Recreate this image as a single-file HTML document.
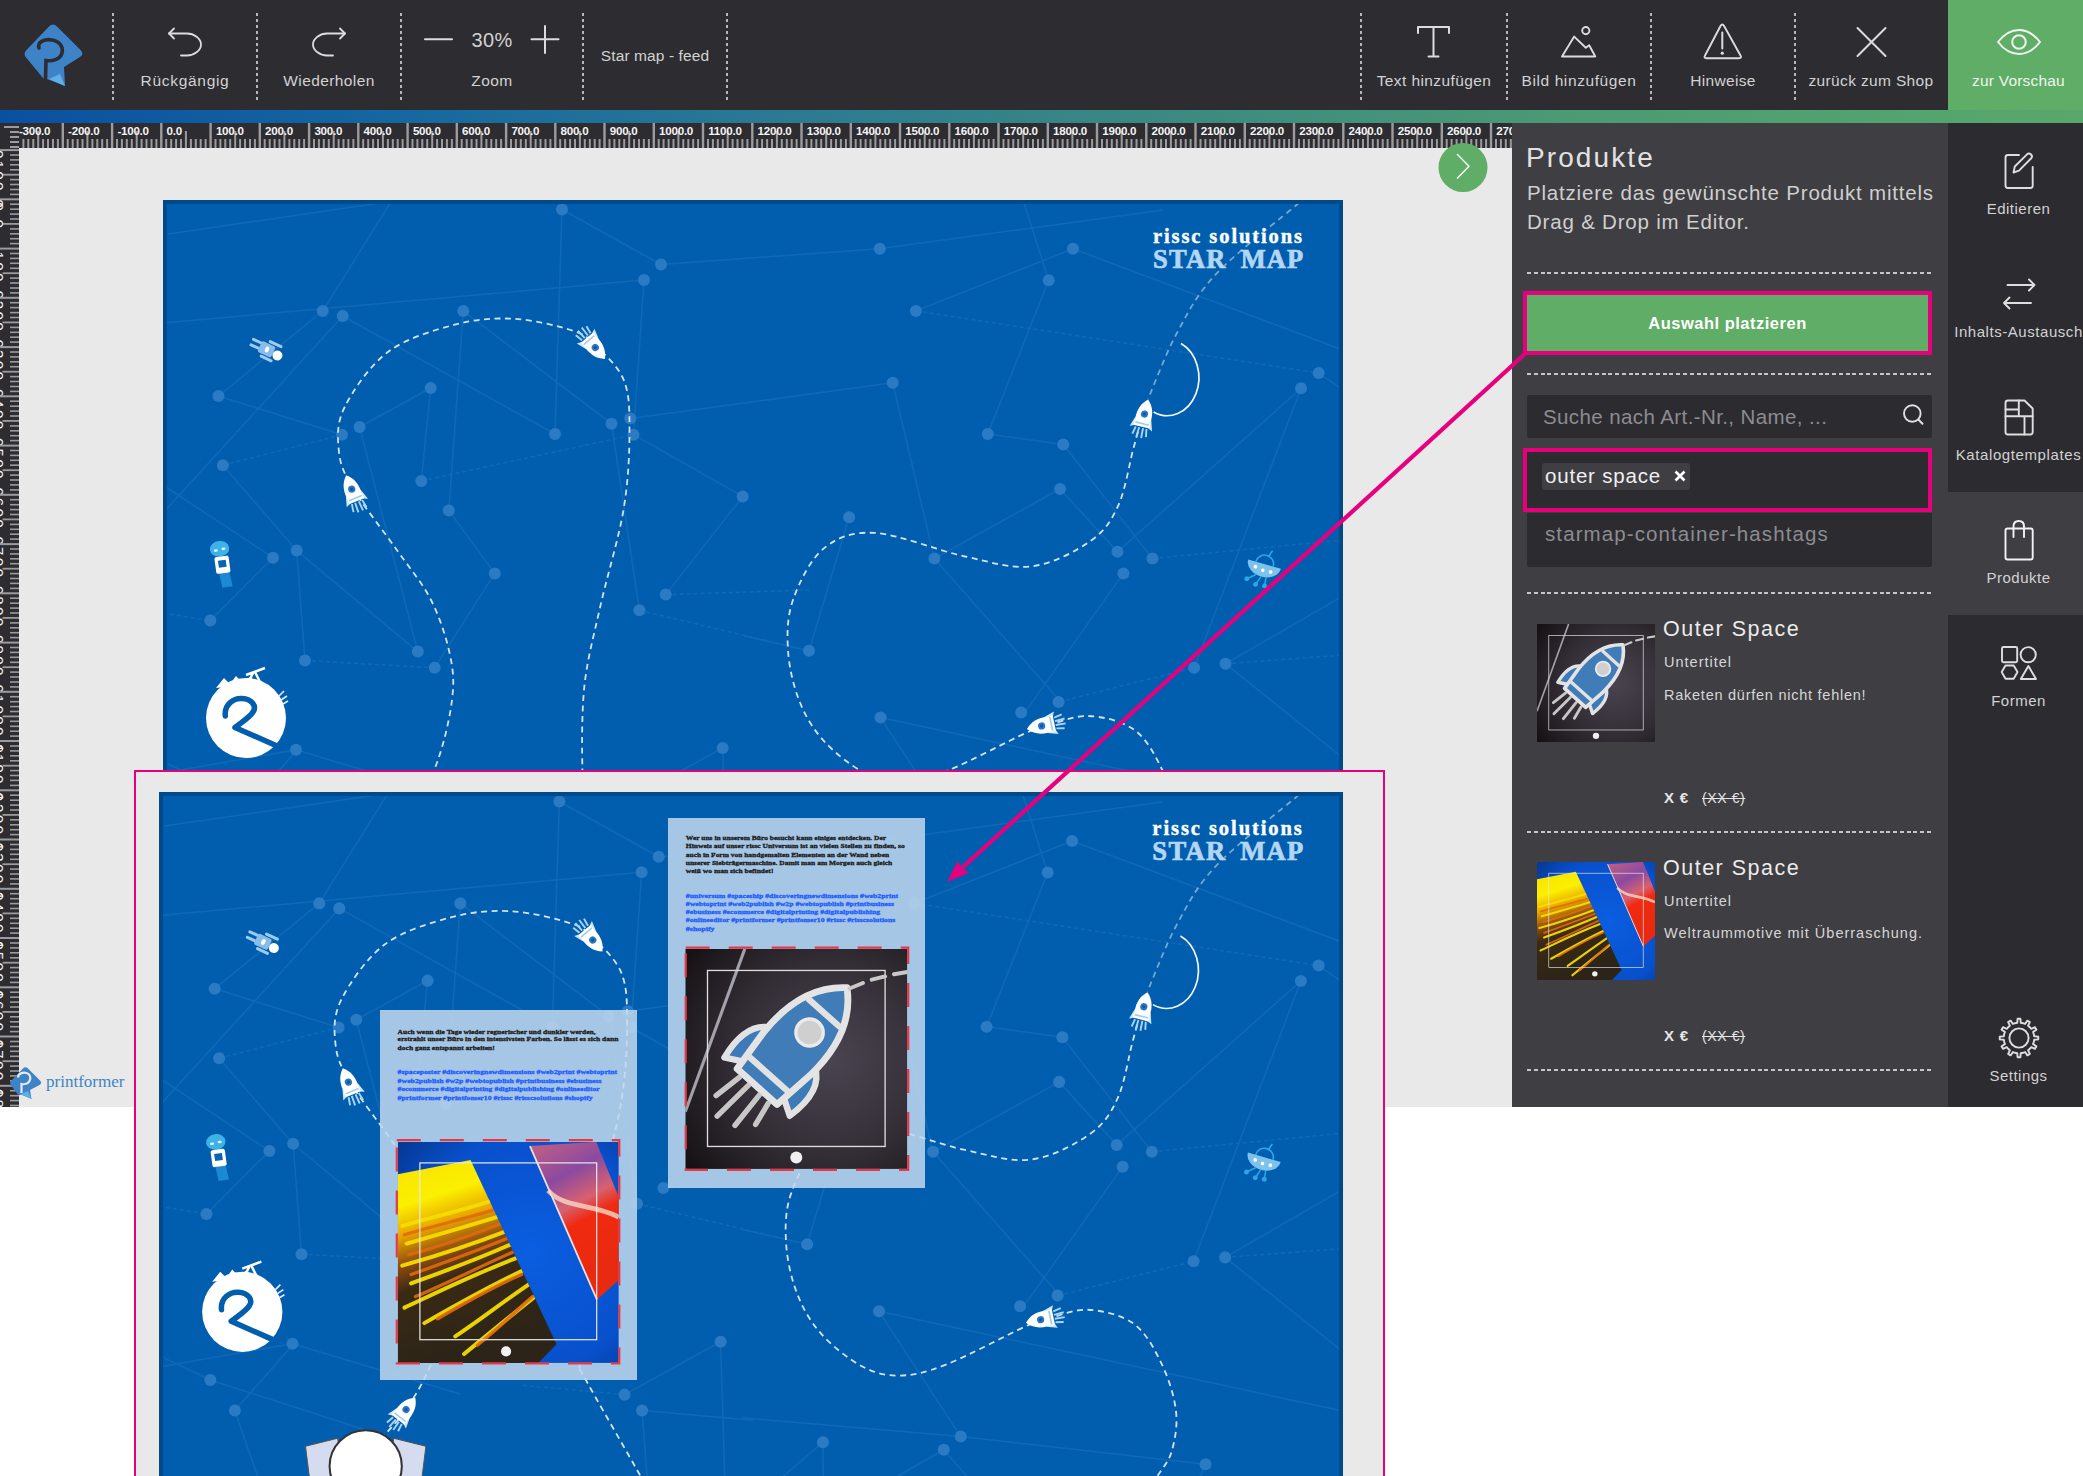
<!DOCTYPE html>
<html><head><meta charset="utf-8">
<style>
*{box-sizing:border-box;margin:0;padding:0}
html,body{width:2083px;height:1476px;overflow:hidden;background:#fff;font-family:"Liberation Sans",sans-serif}
.a{position:absolute}
#toolbar{left:0;top:0;width:2083px;height:110px;background:#2d2c31}
#grad{left:0;top:110px;width:2083px;height:13px;background:linear-gradient(90deg,#0a50a2 0%,#1468a0 19%,#2c7a93 38%,#3d8b80 58%,#4a9a74 75%,#58a86c 100%)}
#canvas{left:19px;top:148px;width:1493px;height:959px;background:#e9e9e9}
#panel{left:1512px;top:123px;width:436px;height:984px;background:#3f3e43}
#nav{left:1948px;top:123px;width:135px;height:984px;background:#2c2b30}
.sep{position:absolute;top:13px;height:87px;width:2px;background:repeating-linear-gradient(180deg,#b9b9bb 0 3px,transparent 3px 6px)}
.tl{position:absolute;color:#d2d2d2;font-size:15.5px;letter-spacing:0.45px;white-space:nowrap;text-align:center;line-height:16px}
.ic{position:absolute;overflow:visible}
.dots{position:absolute;left:1527px;width:404px;height:2.5px;margin-top:0.5px;background:repeating-linear-gradient(90deg,#c6c6c6 0 4px,transparent 4px 6.78px)}
#pink{left:134px;top:770px;width:1251px;height:760px;border:2px solid #e6007e;background:#e9e9e9;overflow:hidden}
.nl{position:absolute;left:1951px;width:135px;text-align:center;color:#d2d2d2;font-size:15px;letter-spacing:0.5px;white-space:nowrap;line-height:16px}
.ptxt{position:absolute;color:#d8d8d8;white-space:nowrap}
.card{position:absolute;width:257px;height:370px;background:rgba(255,255,255,0.62)}
.ct{position:absolute;left:17px;width:225px;font-family:"Liberation Serif",serif;font-weight:bold;font-size:6.6px;line-height:7.6px;color:#1f1f1f}
.ch{position:absolute;left:17px;width:225px;font-family:"Liberation Serif",serif;font-weight:bold;font-size:6.6px;line-height:7.6px;color:#2f5cf0}
.img{position:absolute;overflow:hidden}
.dash{position:absolute;border:2px dashed #e0323f}
</style></head><body>
<svg width="0" height="0" style="position:absolute"><defs><g id="starmap"><rect x="0" y="0" width="1180" height="720" fill="#015eae"/>
<g stroke="#3a86cc" stroke-width="1.5" opacity="0.27" fill="none">
<line x1="399.0" y1="9.5" x2="498.0" y2="64.5"/>
<line x1="498.0" y1="64.5" x2="716.8" y2="48.8"/>
<line x1="399.0" y1="9.5" x2="392.0" y2="234.0"/>
<line x1="0.0" y1="123.0" x2="481.0" y2="80.0"/>
<line x1="481.0" y1="80.0" x2="470.5" y2="234.7"/>
<line x1="159.7" y1="111.0" x2="55.5" y2="196.0"/>
<line x1="159.7" y1="111.0" x2="229.0" y2="0.0"/>
<line x1="179.7" y1="116.0" x2="0.0" y2="313.0"/>
<line x1="179.7" y1="116.0" x2="392.0" y2="234.0"/>
<line x1="300.3" y1="111.0" x2="285.8" y2="310.5"/>
<line x1="300.3" y1="111.0" x2="448.5" y2="223.7"/>
<line x1="55.5" y1="196.0" x2="179.0" y2="234.7"/>
<line x1="267.7" y1="188.0" x2="196.6" y2="227.0"/>
<line x1="267.7" y1="188.0" x2="258.3" y2="281.0"/>
<line x1="179.0" y1="234.7" x2="59.9" y2="265.3" stroke-dasharray="4 3"/>
<line x1="196.6" y1="227.0" x2="254.8" y2="451.6"/>
<line x1="258.3" y1="281.0" x2="470.5" y2="234.7" stroke-dasharray="4 3"/>
<line x1="467.3" y1="218.6" x2="729.7" y2="182.8"/>
<line x1="470.5" y1="234.7" x2="579.7" y2="296.4"/>
<line x1="448.5" y1="223.7" x2="476.4" y2="410.3"/>
<line x1="579.7" y1="296.4" x2="502.7" y2="394.6"/>
<line x1="502.7" y1="394.6" x2="646.0" y2="390.0" stroke-dasharray="4 3"/>
<line x1="476.4" y1="410.3" x2="646.0" y2="450.8" stroke-dasharray="4 3"/>
<line x1="285.8" y1="310.5" x2="331.8" y2="373.4"/>
<line x1="331.8" y1="373.4" x2="271.7" y2="467.7"/>
<line x1="133.7" y1="350.6" x2="142.0" y2="460.6"/>
<line x1="133.7" y1="350.6" x2="254.8" y2="451.6"/>
<line x1="59.9" y1="265.3" x2="133.7" y2="350.6"/>
<line x1="110.0" y1="357.7" x2="47.3" y2="420.5"/>
<line x1="0.0" y1="285.0" x2="110.0" y2="357.7"/>
<line x1="0.0" y1="413.0" x2="47.3" y2="420.5" stroke-dasharray="4 3"/>
<line x1="142.0" y1="460.6" x2="271.7" y2="467.7" stroke-dasharray="4 3"/>
<line x1="5.0" y1="34.0" x2="217.0" y2="3.0"/>
<line x1="0.0" y1="573.0" x2="133.0" y2="549.8"/>
<line x1="133.0" y1="549.8" x2="300.0" y2="600.0"/>
<line x1="716.8" y1="48.8" x2="1000.0" y2="10.0"/>
<line x1="910.0" y1="48.8" x2="752.9" y2="110.9"/>
<line x1="910.0" y1="48.8" x2="1180.0" y2="150.0"/>
<line x1="885.7" y1="80.3" x2="824.8" y2="233.9"/>
<line x1="885.7" y1="80.3" x2="860.0" y2="0.0"/>
<line x1="752.9" y1="110.9" x2="1155.7" y2="173.0" stroke-dasharray="4 3"/>
<line x1="729.7" y1="182.8" x2="771.4" y2="358.5"/>
<line x1="824.8" y1="233.9" x2="900.3" y2="244.5"/>
<line x1="900.3" y1="244.5" x2="989.5" y2="358.5"/>
<line x1="897.1" y1="288.9" x2="954.5" y2="351.8"/>
<line x1="897.1" y1="288.9" x2="771.4" y2="358.5"/>
<line x1="686.1" y1="317.2" x2="646.0" y2="450.8"/>
<line x1="771.4" y1="358.5" x2="898.8" y2="503.0"/>
<line x1="989.5" y1="358.5" x2="1180.0" y2="340.0" stroke-dasharray="4 3"/>
<line x1="960.4" y1="373.4" x2="860.8" y2="513.9"/>
<line x1="1138.0" y1="188.3" x2="954.5" y2="351.8"/>
<line x1="1138.0" y1="188.3" x2="1031.1" y2="467.7"/>
<line x1="1155.7" y1="173.0" x2="1180.0" y2="190.0"/>
<line x1="646.0" y1="450.8" x2="581.0" y2="436.0"/>
<line x1="717.6" y1="517.6" x2="799.0" y2="642.4"/>
<line x1="717.6" y1="517.6" x2="1180.0" y2="617.0"/>
<line x1="895.6" y1="501.9" x2="1031.1" y2="467.7" stroke-dasharray="4 3"/>
<line x1="1062.5" y1="463.8" x2="1180.0" y2="396.0"/>
<line x1="1062.5" y1="463.8" x2="1180.0" y2="455.0" stroke-dasharray="4 3"/>
<line x1="1062.5" y1="463.8" x2="1180.0" y2="558.0"/>
<line x1="581.0" y1="623.7" x2="799.0" y2="642.4"/>
<line x1="799.0" y1="642.4" x2="1043.0" y2="670.0"/>
<line x1="661.7" y1="648.0" x2="612.7" y2="690.0"/>
<line x1="661.7" y1="648.0" x2="662.0" y2="690.0"/>
<line x1="782.1" y1="655.5" x2="722.0" y2="690.0"/>
<line x1="782.1" y1="655.5" x2="812.0" y2="690.0"/>
<line x1="1043.0" y1="670.0" x2="1034.0" y2="690.0"/>
<line x1="5.0" y1="564.0" x2="51.2" y2="586.0"/>
<line x1="51.2" y1="586.0" x2="228.0" y2="643.0"/>
<line x1="75.6" y1="616.4" x2="132.7" y2="551.6"/>
<line x1="75.6" y1="616.4" x2="101.0" y2="690.0"/>
<line x1="464.0" y1="600.6" x2="559.7" y2="547.9"/>
<line x1="481.4" y1="616.4" x2="592.0" y2="626.0"/>
<line x1="481.4" y1="616.4" x2="487.0" y2="690.0"/>
<line x1="559.7" y1="547.9" x2="564.0" y2="690.0"/>
<line x1="464.0" y1="600.6" x2="360.0" y2="591.0" stroke-dasharray="4 3"/>
</g>
<g fill="#2a7bc4">
<circle cx="399.0" cy="9.5" r="6"/>
<circle cx="498.0" cy="64.5" r="6"/>
<circle cx="481.0" cy="80.0" r="6"/>
<circle cx="159.7" cy="111.0" r="6"/>
<circle cx="179.7" cy="116.0" r="6"/>
<circle cx="300.3" cy="111.0" r="6"/>
<circle cx="55.5" cy="196.0" r="6"/>
<circle cx="267.7" cy="188.0" r="6"/>
<circle cx="196.6" cy="227.0" r="6"/>
<circle cx="179.0" cy="234.7" r="6"/>
<circle cx="392.0" cy="234.0" r="6"/>
<circle cx="448.5" cy="223.7" r="6"/>
<circle cx="467.3" cy="218.6" r="6"/>
<circle cx="470.5" cy="234.7" r="6"/>
<circle cx="59.9" cy="265.3" r="6"/>
<circle cx="258.3" cy="281.0" r="6"/>
<circle cx="285.8" cy="310.5" r="6"/>
<circle cx="579.7" cy="296.4" r="6"/>
<circle cx="110.0" cy="357.7" r="6"/>
<circle cx="133.7" cy="350.6" r="6"/>
<circle cx="331.8" cy="373.4" r="6"/>
<circle cx="47.3" cy="420.5" r="6"/>
<circle cx="502.7" cy="394.6" r="6"/>
<circle cx="476.4" cy="410.3" r="6"/>
<circle cx="254.8" cy="451.6" r="6"/>
<circle cx="142.0" cy="460.6" r="6"/>
<circle cx="271.7" cy="467.7" r="6"/>
<circle cx="133.0" cy="549.8" r="6"/>
<circle cx="559.7" cy="547.9" r="6"/>
<circle cx="716.8" cy="48.8" r="6"/>
<circle cx="910.0" cy="48.8" r="6"/>
<circle cx="885.7" cy="80.3" r="6"/>
<circle cx="752.9" cy="110.9" r="6"/>
<circle cx="729.7" cy="182.8" r="6"/>
<circle cx="1155.7" cy="173.0" r="6"/>
<circle cx="1138.0" cy="188.3" r="6"/>
<circle cx="824.8" cy="233.9" r="6"/>
<circle cx="900.3" cy="244.5" r="6"/>
<circle cx="897.1" cy="288.9" r="6"/>
<circle cx="686.1" cy="317.2" r="6"/>
<circle cx="771.4" cy="358.5" r="6"/>
<circle cx="954.5" cy="351.8" r="6"/>
<circle cx="989.5" cy="358.5" r="6"/>
<circle cx="960.4" cy="373.4" r="6"/>
<circle cx="646.0" cy="450.8" r="6"/>
<circle cx="1031.1" cy="467.7" r="6"/>
<circle cx="1062.5" cy="463.8" r="6"/>
<circle cx="895.6" cy="501.9" r="6"/>
<circle cx="858.2" cy="512.5" r="6"/>
<circle cx="717.6" cy="517.6" r="6"/>
<circle cx="51.2" cy="586.0" r="6"/>
<circle cx="75.6" cy="616.4" r="6"/>
<circle cx="464.0" cy="600.6" r="6"/>
<circle cx="481.4" cy="616.4" r="6"/>
<circle cx="799.0" cy="642.4" r="6"/>
<circle cx="782.1" cy="655.5" r="6"/>
<circle cx="661.7" cy="648.0" r="6"/>
<circle cx="1043.0" cy="670.0" r="6"/>
</g>
<g stroke="#d6e2ef" stroke-width="1.8" fill="none" stroke-dasharray="6 4.5">
<path d="M206.0,660.0 C212.5,652.8 233.8,633.0 245.0,617.0 C256.2,601.0 266.2,583.5 273.5,564.0 C280.8,544.5 286.8,518.2 289.0,500.0 C291.2,481.8 290.5,471.7 287.0,455.0 C283.5,438.3 277.0,417.7 268.0,400.0 C259.0,382.3 245.9,367.3 232.8,348.6 C219.7,329.9 199.0,304.1 189.5,287.7 C180.0,271.3 177.1,263.9 175.8,250.4 C174.5,237.0 173.5,223.4 181.7,207.0 C189.9,190.6 206.6,165.7 224.9,152.0 C243.2,138.3 270.8,130.2 291.7,124.7 C312.6,119.2 331.0,117.8 350.6,118.8 C370.2,119.8 396.2,126.3 409.6,130.6 C423.0,134.8 422.5,136.1 431.0,144.3 C439.5,152.5 454.7,165.3 460.6,179.7 C466.5,194.1 466.5,209.2 466.5,230.8 C466.5,252.4 465.5,279.8 460.6,309.3 C455.7,338.8 443.5,378.2 437.0,407.6 C430.5,437.1 424.3,459.1 421.4,486.0 C418.5,512.9 419.0,552.6 419.4,568.7 C419.8,584.8 413.1,563.2 423.5,582.5 C433.9,601.8 468.8,661.8 481.5,684.7 C494.2,707.6 496.9,714.1 500.0,720.0"/>
<path d="M975.0,232.0 C974.2,235.0 973.3,237.8 970.0,250.0 C966.7,262.2 962.3,290.3 955.3,305.4 C948.3,320.5 942.2,330.6 927.8,340.8 C913.4,351.0 889.8,363.7 868.8,366.3 C847.8,368.9 828.2,362.1 802.0,356.5 C775.8,350.9 735.3,334.2 711.7,332.9 C688.1,331.6 674.2,337.4 660.6,348.6 C647.0,359.8 635.9,383.1 630.0,400.0 C624.1,416.9 624.0,433.3 625.0,450.0 C626.0,466.7 630.2,485.0 636.0,500.0 C641.8,515.0 649.3,528.0 660.0,540.0 C670.7,552.0 687.1,565.1 700.0,572.0 C712.9,578.9 723.5,581.8 737.5,581.6 C751.5,581.4 763.5,578.8 784.3,570.7 C805.1,562.6 846.2,540.5 862.3,533.2 C878.4,525.9 870.6,529.9 881.0,527.0 C891.4,524.1 909.6,515.5 924.7,516.0 C939.8,516.5 959.0,520.9 971.5,530.0 C984.0,539.1 992.6,556.1 999.6,570.7 C1006.6,585.3 1012.0,603.0 1013.6,617.5 C1015.2,632.0 1012.4,646.8 1009.0,658.0 C1005.6,669.2 998.2,675.8 993.4,684.5 C988.6,693.2 982.2,705.8 980.0,710.0"/>
<path d="M1136.0,2.9 C1122.2,14.7 1073.8,52.0 1053.5,73.6 C1033.2,95.2 1025.6,111.6 1014.2,132.5 C1002.8,153.4 989.9,187.9 985.0,199.0" opacity="0.55"/>
</g>
<path d="M1018,143.5 A30,36 0 0 1 990.6,211.9" stroke="#f4f8fc" stroke-width="1.7" fill="none"/>
<g transform="translate(189.5,291.0) rotate(-22) scale(1.00)"><path d="M-8,2 L-11.5,13 L-7,11Z M8,2 L11.5,13 L7,11Z" fill="#cfe6f9"/><path d="M0,-17 C6.5,-11 8,-5 8,3 L8,11 L-8,11 L-8,3 C-8,-5 -6.5,-11 0,-17Z" fill="#fff"/><circle cx="0" cy="-2" r="3.6" fill="#2a78c4"/><circle cx="0" cy="-2" r="1.7" fill="#0f5aa8"/><rect x="-7" y="7" width="14" height="1.6" fill="#9fcdf2"/><path d="M-5.5,12 L-7,20 M-2,12 L-2.5,22 M2,12 L2.5,22 M5.5,12 L7,20" stroke="#a8d4f6" stroke-width="1.9"/></g>
<g transform="translate(431.0,146.0) rotate(140) scale(1.00)"><path d="M-8,2 L-11.5,13 L-7,11Z M8,2 L11.5,13 L7,11Z" fill="#cfe6f9"/><path d="M0,-17 C6.5,-11 8,-5 8,3 L8,11 L-8,11 L-8,3 C-8,-5 -6.5,-11 0,-17Z" fill="#fff"/><circle cx="0" cy="-2" r="3.6" fill="#2a78c4"/><circle cx="0" cy="-2" r="1.7" fill="#0f5aa8"/><rect x="-7" y="7" width="14" height="1.6" fill="#9fcdf2"/><path d="M-5.5,12 L-7,20 M-2,12 L-2.5,22 M2,12 L2.5,22 M5.5,12 L7,20" stroke="#a8d4f6" stroke-width="1.9"/></g>
<g transform="translate(981.0,216.0) rotate(14) scale(1.00)"><path d="M-8,2 L-11.5,13 L-7,11Z M8,2 L11.5,13 L7,11Z" fill="#cfe6f9"/><path d="M0,-17 C6.5,-11 8,-5 8,3 L8,11 L-8,11 L-8,3 C-8,-5 -6.5,-11 0,-17Z" fill="#fff"/><circle cx="0" cy="-2" r="3.6" fill="#2a78c4"/><circle cx="0" cy="-2" r="1.7" fill="#0f5aa8"/><rect x="-7" y="7" width="14" height="1.6" fill="#9fcdf2"/><path d="M-5.5,12 L-7,20 M-2,12 L-2.5,22 M2,12 L2.5,22 M5.5,12 L7,20" stroke="#a8d4f6" stroke-width="1.9"/></g>
<g transform="translate(880.6,525.5) rotate(-102) scale(1.00)"><path d="M-8,2 L-11.5,13 L-7,11Z M8,2 L11.5,13 L7,11Z" fill="#cfe6f9"/><path d="M0,-17 C6.5,-11 8,-5 8,3 L8,11 L-8,11 L-8,3 C-8,-5 -6.5,-11 0,-17Z" fill="#fff"/><circle cx="0" cy="-2" r="3.6" fill="#2a78c4"/><circle cx="0" cy="-2" r="1.7" fill="#0f5aa8"/><rect x="-7" y="7" width="14" height="1.6" fill="#9fcdf2"/><path d="M-5.5,12 L-7,20 M-2,12 L-2.5,22 M2,12 L2.5,22 M5.5,12 L7,20" stroke="#a8d4f6" stroke-width="1.9"/></g>
<g transform="translate(245.0,617.0) rotate(38) scale(1.00)"><path d="M-8,2 L-11.5,13 L-7,11Z M8,2 L11.5,13 L7,11Z" fill="#cfe6f9"/><path d="M0,-17 C6.5,-11 8,-5 8,3 L8,11 L-8,11 L-8,3 C-8,-5 -6.5,-11 0,-17Z" fill="#fff"/><circle cx="0" cy="-2" r="3.6" fill="#2a78c4"/><circle cx="0" cy="-2" r="1.7" fill="#0f5aa8"/><rect x="-7" y="7" width="14" height="1.6" fill="#9fcdf2"/><path d="M-5.5,12 L-7,20 M-2,12 L-2.5,22 M2,12 L2.5,22 M5.5,12 L7,20" stroke="#a8d4f6" stroke-width="1.9"/></g>
<g transform="translate(104,149.5) rotate(25)"><rect x="-18" y="-5" width="11" height="3" rx="1.5" fill="#9ccbef"/><rect x="-18" y="1" width="11" height="3" rx="1.5" fill="#9ccbef"/><rect x="-2" y="-10" width="15" height="3" rx="1.5" fill="#9ccbef"/><rect x="-4" y="7" width="14" height="3" rx="1.5" fill="#9ccbef"/><rect x="-8" y="-6" width="15" height="12" rx="2" fill="#88bde9"/><ellipse cx="0" cy="0" rx="2" ry="3" fill="#fff"/><circle cx="12" cy="1" r="5" fill="#fff"/></g>
<g transform="translate(60,364) scale(1.3) rotate(-8)"><path d="M-4,6 L4,6 L5,18 L-3,18Z" fill="#1c8ad2"/><ellipse cx="-1" cy="-12" rx="7.5" ry="6" fill="#3db2e8"/><ellipse cx="-4" cy="-11" rx="1.6" ry="1" fill="#e8f4fc"/><ellipse cx="2" cy="-11.5" rx="1.6" ry="1" fill="#e8f4fc"/><rect x="-6" y="-6" width="11" height="13" rx="1.5" fill="#fff"/><rect x="-3.5" y="-3" width="6" height="5.5" fill="#0a62b4"/></g>
<g transform="translate(1101,366) rotate(16)"><path d="M-9,-2 A9,9 0 0 1 9,-2" stroke="#2aa8e6" stroke-width="1.6" fill="none"/><path d="M2,-11 L4,-17" stroke="#2aa8e6" stroke-width="1.6"/><path d="M-17,-2 L17,-2 A17,13 0 0 1 -17,-2Z" fill="#7cc2ec"/><circle cx="-8" cy="3" r="1.8" fill="#fff"/><circle cx="0" cy="4.5" r="1.8" fill="#fff"/><circle cx="8" cy="4" r="1.8" fill="#fff"/><path d="M-5,10 L-13,17 M0,11 L-3,20 M5,10 L6,19" stroke="#28a8e6" stroke-width="1.5"/><circle cx="-13" cy="17" r="2.4" fill="#28a8e6"/><circle cx="-3" cy="20" r="2.4" fill="#28a8e6"/><circle cx="6" cy="19" r="2.4" fill="#28a8e6"/></g>
<g transform="translate(83,518)"><circle cx="0" cy="0" r="40" fill="#fff"/><path d="M-22,-40 L-16,-34 L-10,-42 L-4,-36 L4,-41 L10,-35 L-30,-30Z" fill="#fff"/><path d="M-20.7,-2 C-22,-14 -12,-20 -4,-19.5 C6,-19 11,-12 7,-6 C4,-1 -4,4 -11,9.5 L31,28" stroke="#015eae" stroke-width="5.5" fill="none" stroke-linecap="round" stroke-linejoin="round"/><path d="M0,-43 L19,-50 M7,-45 L3,-37 M9,-46 L14,-36" stroke="#fff" stroke-width="2.5"/><path d="M33,-22 L38,-27 M35,-18 L41,-22 M37,-14 L42,-17" stroke="#e0ecf8" stroke-width="1.6"/></g>
<g transform="translate(206,672)"><path d="M-60,-20 L-28,-28 L-20,20 L-55,20Z" fill="#d5dcf0" stroke="#555" stroke-width="1"/><path d="M60,-20 L28,-28 L20,20 L55,20Z" fill="#d5dcf0" stroke="#555" stroke-width="1"/><circle cx="0" cy="0" r="36" fill="#fff" stroke="#333" stroke-width="2"/></g>
<text x="990" y="42.5" font-family="Liberation Serif" font-weight="bold" font-size="20.5" fill="#fff" stroke="#fff" stroke-width="0.4" textLength="149" lengthAdjust="spacing">rissc solutions</text>
<text x="990" y="68" font-family="Liberation Serif" font-weight="bold" font-size="26.5" fill="#b3d6f3" stroke="#b3d6f3" stroke-width="0.7" textLength="72.5" lengthAdjust="spacing">STAR</text><text x="1077.7" y="68" font-family="Liberation Serif" font-weight="bold" font-size="26.5" fill="#b3d6f3" stroke="#b3d6f3" stroke-width="0.7" textLength="62.6" lengthAdjust="spacing">MAP</text></g></defs></svg>
<div id="toolbar" class="a"></div>
<div id="grad" class="a"></div>
<!-- toolbar icons -->
<svg class="a" style="left:0;top:0" width="2083" height="110">
 <rect x="1948" y="0" width="135" height="110" fill="#5fad66"/>
 <!-- logo -->
 <g>
  <path d="M49,26.5 Q53,22.5 57,26.5 L80.5,50 Q84.5,54 80,57 L64,67 L65,86 L47,79 Q45,80 43,78 L26.5,58 Q22.5,54 26.5,50Z" fill="#3e83c7"/>
  <path d="M49,79 L60,74 L65,86Z" fill="#5fb0e8"/>
  <path d="M39,48 C37,42 45,38.5 52,40 C60,41.5 63.5,47 62,53 C60.5,59 53,61.5 46,60.5 L45.5,78.5" stroke="#2d2c31" stroke-width="3.6" fill="none" stroke-linecap="round"/>
 </g>
 <g stroke="#dcdcdc" stroke-width="1.8" fill="none" stroke-linecap="round" stroke-linejoin="round">
  <!-- undo -->
  <path d="M169,33.5 L187,33.5 C194,33.5 201,38.5 201,44.5 C201,50.5 194,55.5 187,55.5 L181,55.5"/>
  <path d="M174,28.5 L169,33.5 L174,38.5"/>
  <!-- redo -->
  <path d="M345,33.5 L327,33.5 C320,33.5 313,38.5 313,44.5 C313,50.5 320,55.5 327,55.5 L333,55.5"/>
  <path d="M340,28.5 L345,33.5 L340,38.5"/>
  <!-- minus / plus -->
  <path d="M425,39.3 L452,39.3" stroke-width="2"/>
  <path d="M531.5,39.3 L558.5,39.3 M545,26 L545,53" stroke-width="2"/>
  <!-- T -->
  <path d="M1418,33 L1418,27 L1449,27 L1449,33 M1433.5,27 L1433.5,56.5 M1428.5,56.5 L1438.5,56.5" stroke-width="2"/>
  <!-- image -->
  <path d="M1562,56.5 L1574.2,36.6 L1585.8,47.8 L1589.2,45.2 L1595.3,56.5Z" stroke-width="1.9"/>
  <circle cx="1585.8" cy="30.6" r="3.6" stroke-width="1.9"/>
  <!-- warning -->
  <path d="M1720.5,26 Q1722.3,23 1724.1,26 L1740.5,55.5 Q1742,58.2 1739,58.2 L1706.5,58.2 Q1703.5,58.2 1705,55.5Z" stroke-width="1.9"/>
  <path d="M1722.3,32.5 L1722.3,48.5" stroke-width="2"/>
  <!-- X -->
  <path d="M1857.5,28 L1885.5,56 M1885.5,28 L1857.5,56" stroke-width="2"/>
 </g>
 <circle cx="1722.3" cy="53.2" r="1.6" fill="#dcdcdc"/>
 <!-- eye -->
 <g stroke="#eef6ee" stroke-width="2" fill="none">
  <path d="M1998,42 C2005,33 2012,30 2019,30 C2026,30 2033,33 2040,42 C2033,51 2026,54 2019,54 C2012,54 2005,51 1998,42Z"/>
  <circle cx="2019" cy="42" r="6.8"/>
 </g>
</svg>
<div class="sep" style="left:112px"></div>
<div class="sep" style="left:256px"></div>
<div class="sep" style="left:400px"></div>
<div class="sep" style="left:582px"></div>
<div class="sep" style="left:726px"></div>
<div class="sep" style="left:1360px"></div>
<div class="sep" style="left:1506px"></div>
<div class="sep" style="left:1650px"></div>
<div class="sep" style="left:1794px"></div>
<div class="tl" style="left:115px;width:140px;top:73px;letter-spacing:0.7px">Rückgängig</div>
<div class="tl" style="left:258px;width:142px;top:73px;letter-spacing:0.4px">Wiederholen</div>
<div class="tl" style="left:402px;width:180px;top:73px">Zoom</div>
<div class="tl" style="left:402px;width:180px;top:30px;font-size:20px;letter-spacing:0.3px;line-height:20px">30%</div>
<div class="tl" style="left:584px;width:142px;top:47.5px;letter-spacing:0.1px">Star map - feed</div>
<div class="tl" style="left:1362px;width:144px;top:73px;letter-spacing:0.4px">Text hinzufügen</div>
<div class="tl" style="left:1508px;width:142px;top:73px;letter-spacing:0.6px">Bild hinzufügen</div>
<div class="tl" style="left:1652px;width:142px;top:73px;letter-spacing:0.3px">Hinweise</div>
<div class="tl" style="left:1796px;width:150px;top:73px;letter-spacing:0.35px">zurück zum Shop</div>
<div class="tl" style="left:1954px;width:129px;top:73px;color:#eef6ee;letter-spacing:0.2px">zur Vorschau</div>

<svg class="a" style="left:0;top:123px" width="1512" height="25">
<rect width="1512" height="25" fill="#2d2c31"/>
<rect x="22.4" y="16" width="2" height="9" fill="#9c9c9e"/>
<rect x="27.3" y="16" width="2" height="9" fill="#9c9c9e"/>
<rect x="32.3" y="16" width="2" height="9" fill="#9c9c9e"/>
<rect x="37.2" y="8" width="2" height="17" fill="#9c9c9e"/>
<rect x="42.1" y="16" width="2" height="9" fill="#9c9c9e"/>
<rect x="47.0" y="16" width="2" height="9" fill="#9c9c9e"/>
<rect x="52.0" y="16" width="2" height="9" fill="#9c9c9e"/>
<rect x="56.9" y="16" width="2" height="9" fill="#9c9c9e"/>
<rect x="61.6" y="0" width="2.4" height="25" fill="#9c9c9e"/>
<rect x="66.7" y="16" width="2" height="9" fill="#9c9c9e"/>
<rect x="71.7" y="16" width="2" height="9" fill="#9c9c9e"/>
<rect x="76.6" y="16" width="2" height="9" fill="#9c9c9e"/>
<rect x="81.5" y="16" width="2" height="9" fill="#9c9c9e"/>
<rect x="86.4" y="8" width="2" height="17" fill="#9c9c9e"/>
<rect x="91.4" y="16" width="2" height="9" fill="#9c9c9e"/>
<rect x="96.3" y="16" width="2" height="9" fill="#9c9c9e"/>
<rect x="101.2" y="16" width="2" height="9" fill="#9c9c9e"/>
<rect x="106.1" y="16" width="2" height="9" fill="#9c9c9e"/>
<rect x="110.9" y="0" width="2.4" height="25" fill="#9c9c9e"/>
<rect x="116.0" y="16" width="2" height="9" fill="#9c9c9e"/>
<rect x="120.9" y="16" width="2" height="9" fill="#9c9c9e"/>
<rect x="125.8" y="16" width="2" height="9" fill="#9c9c9e"/>
<rect x="130.8" y="16" width="2" height="9" fill="#9c9c9e"/>
<rect x="135.7" y="8" width="2" height="17" fill="#9c9c9e"/>
<rect x="140.6" y="16" width="2" height="9" fill="#9c9c9e"/>
<rect x="145.5" y="16" width="2" height="9" fill="#9c9c9e"/>
<rect x="150.5" y="16" width="2" height="9" fill="#9c9c9e"/>
<rect x="155.4" y="16" width="2" height="9" fill="#9c9c9e"/>
<rect x="160.1" y="0" width="2.4" height="25" fill="#9c9c9e"/>
<rect x="165.2" y="16" width="2" height="9" fill="#9c9c9e"/>
<rect x="170.2" y="16" width="2" height="9" fill="#9c9c9e"/>
<rect x="175.1" y="16" width="2" height="9" fill="#9c9c9e"/>
<rect x="180.0" y="16" width="2" height="9" fill="#9c9c9e"/>
<rect x="184.9" y="8" width="2" height="17" fill="#9c9c9e"/>
<rect x="189.9" y="16" width="2" height="9" fill="#9c9c9e"/>
<rect x="194.8" y="16" width="2" height="9" fill="#9c9c9e"/>
<rect x="199.7" y="16" width="2" height="9" fill="#9c9c9e"/>
<rect x="204.6" y="16" width="2" height="9" fill="#9c9c9e"/>
<rect x="209.4" y="0" width="2.4" height="25" fill="#9c9c9e"/>
<rect x="214.5" y="16" width="2" height="9" fill="#9c9c9e"/>
<rect x="219.4" y="16" width="2" height="9" fill="#9c9c9e"/>
<rect x="224.3" y="16" width="2" height="9" fill="#9c9c9e"/>
<rect x="229.2" y="16" width="2" height="9" fill="#9c9c9e"/>
<rect x="234.2" y="8" width="2" height="17" fill="#9c9c9e"/>
<rect x="239.1" y="16" width="2" height="9" fill="#9c9c9e"/>
<rect x="244.0" y="16" width="2" height="9" fill="#9c9c9e"/>
<rect x="249.0" y="16" width="2" height="9" fill="#9c9c9e"/>
<rect x="253.9" y="16" width="2" height="9" fill="#9c9c9e"/>
<rect x="258.6" y="0" width="2.4" height="25" fill="#9c9c9e"/>
<rect x="263.7" y="16" width="2" height="9" fill="#9c9c9e"/>
<rect x="268.7" y="16" width="2" height="9" fill="#9c9c9e"/>
<rect x="273.6" y="16" width="2" height="9" fill="#9c9c9e"/>
<rect x="278.5" y="16" width="2" height="9" fill="#9c9c9e"/>
<rect x="283.4" y="8" width="2" height="17" fill="#9c9c9e"/>
<rect x="288.4" y="16" width="2" height="9" fill="#9c9c9e"/>
<rect x="293.3" y="16" width="2" height="9" fill="#9c9c9e"/>
<rect x="298.2" y="16" width="2" height="9" fill="#9c9c9e"/>
<rect x="303.1" y="16" width="2" height="9" fill="#9c9c9e"/>
<rect x="307.9" y="0" width="2.4" height="25" fill="#9c9c9e"/>
<rect x="313.0" y="16" width="2" height="9" fill="#9c9c9e"/>
<rect x="317.9" y="16" width="2" height="9" fill="#9c9c9e"/>
<rect x="322.8" y="16" width="2" height="9" fill="#9c9c9e"/>
<rect x="327.8" y="16" width="2" height="9" fill="#9c9c9e"/>
<rect x="332.7" y="8" width="2" height="17" fill="#9c9c9e"/>
<rect x="337.6" y="16" width="2" height="9" fill="#9c9c9e"/>
<rect x="342.5" y="16" width="2" height="9" fill="#9c9c9e"/>
<rect x="347.4" y="16" width="2" height="9" fill="#9c9c9e"/>
<rect x="352.4" y="16" width="2" height="9" fill="#9c9c9e"/>
<rect x="357.1" y="0" width="2.4" height="25" fill="#9c9c9e"/>
<rect x="362.2" y="16" width="2" height="9" fill="#9c9c9e"/>
<rect x="367.2" y="16" width="2" height="9" fill="#9c9c9e"/>
<rect x="372.1" y="16" width="2" height="9" fill="#9c9c9e"/>
<rect x="377.0" y="16" width="2" height="9" fill="#9c9c9e"/>
<rect x="381.9" y="8" width="2" height="17" fill="#9c9c9e"/>
<rect x="386.9" y="16" width="2" height="9" fill="#9c9c9e"/>
<rect x="391.8" y="16" width="2" height="9" fill="#9c9c9e"/>
<rect x="396.7" y="16" width="2" height="9" fill="#9c9c9e"/>
<rect x="401.6" y="16" width="2" height="9" fill="#9c9c9e"/>
<rect x="406.4" y="0" width="2.4" height="25" fill="#9c9c9e"/>
<rect x="411.5" y="16" width="2" height="9" fill="#9c9c9e"/>
<rect x="416.4" y="16" width="2" height="9" fill="#9c9c9e"/>
<rect x="421.3" y="16" width="2" height="9" fill="#9c9c9e"/>
<rect x="426.2" y="16" width="2" height="9" fill="#9c9c9e"/>
<rect x="431.2" y="8" width="2" height="17" fill="#9c9c9e"/>
<rect x="436.1" y="16" width="2" height="9" fill="#9c9c9e"/>
<rect x="441.0" y="16" width="2" height="9" fill="#9c9c9e"/>
<rect x="445.9" y="16" width="2" height="9" fill="#9c9c9e"/>
<rect x="450.9" y="16" width="2" height="9" fill="#9c9c9e"/>
<rect x="455.6" y="0" width="2.4" height="25" fill="#9c9c9e"/>
<rect x="460.7" y="16" width="2" height="9" fill="#9c9c9e"/>
<rect x="465.7" y="16" width="2" height="9" fill="#9c9c9e"/>
<rect x="470.6" y="16" width="2" height="9" fill="#9c9c9e"/>
<rect x="475.5" y="16" width="2" height="9" fill="#9c9c9e"/>
<rect x="480.4" y="8" width="2" height="17" fill="#9c9c9e"/>
<rect x="485.4" y="16" width="2" height="9" fill="#9c9c9e"/>
<rect x="490.3" y="16" width="2" height="9" fill="#9c9c9e"/>
<rect x="495.2" y="16" width="2" height="9" fill="#9c9c9e"/>
<rect x="500.1" y="16" width="2" height="9" fill="#9c9c9e"/>
<rect x="504.9" y="0" width="2.4" height="25" fill="#9c9c9e"/>
<rect x="510.0" y="16" width="2" height="9" fill="#9c9c9e"/>
<rect x="514.9" y="16" width="2" height="9" fill="#9c9c9e"/>
<rect x="519.8" y="16" width="2" height="9" fill="#9c9c9e"/>
<rect x="524.8" y="16" width="2" height="9" fill="#9c9c9e"/>
<rect x="529.7" y="8" width="2" height="17" fill="#9c9c9e"/>
<rect x="534.6" y="16" width="2" height="9" fill="#9c9c9e"/>
<rect x="539.5" y="16" width="2" height="9" fill="#9c9c9e"/>
<rect x="544.5" y="16" width="2" height="9" fill="#9c9c9e"/>
<rect x="549.4" y="16" width="2" height="9" fill="#9c9c9e"/>
<rect x="554.1" y="0" width="2.4" height="25" fill="#9c9c9e"/>
<rect x="559.2" y="16" width="2" height="9" fill="#9c9c9e"/>
<rect x="564.1" y="16" width="2" height="9" fill="#9c9c9e"/>
<rect x="569.1" y="16" width="2" height="9" fill="#9c9c9e"/>
<rect x="574.0" y="16" width="2" height="9" fill="#9c9c9e"/>
<rect x="578.9" y="8" width="2" height="17" fill="#9c9c9e"/>
<rect x="583.8" y="16" width="2" height="9" fill="#9c9c9e"/>
<rect x="588.8" y="16" width="2" height="9" fill="#9c9c9e"/>
<rect x="593.7" y="16" width="2" height="9" fill="#9c9c9e"/>
<rect x="598.6" y="16" width="2" height="9" fill="#9c9c9e"/>
<rect x="603.3" y="0" width="2.4" height="25" fill="#9c9c9e"/>
<rect x="608.5" y="16" width="2" height="9" fill="#9c9c9e"/>
<rect x="613.4" y="16" width="2" height="9" fill="#9c9c9e"/>
<rect x="618.3" y="16" width="2" height="9" fill="#9c9c9e"/>
<rect x="623.2" y="16" width="2" height="9" fill="#9c9c9e"/>
<rect x="628.2" y="8" width="2" height="17" fill="#9c9c9e"/>
<rect x="633.1" y="16" width="2" height="9" fill="#9c9c9e"/>
<rect x="638.0" y="16" width="2" height="9" fill="#9c9c9e"/>
<rect x="642.9" y="16" width="2" height="9" fill="#9c9c9e"/>
<rect x="647.9" y="16" width="2" height="9" fill="#9c9c9e"/>
<rect x="652.6" y="0" width="2.4" height="25" fill="#9c9c9e"/>
<rect x="657.7" y="16" width="2" height="9" fill="#9c9c9e"/>
<rect x="662.6" y="16" width="2" height="9" fill="#9c9c9e"/>
<rect x="667.6" y="16" width="2" height="9" fill="#9c9c9e"/>
<rect x="672.5" y="16" width="2" height="9" fill="#9c9c9e"/>
<rect x="677.4" y="8" width="2" height="17" fill="#9c9c9e"/>
<rect x="682.3" y="16" width="2" height="9" fill="#9c9c9e"/>
<rect x="687.3" y="16" width="2" height="9" fill="#9c9c9e"/>
<rect x="692.2" y="16" width="2" height="9" fill="#9c9c9e"/>
<rect x="697.1" y="16" width="2" height="9" fill="#9c9c9e"/>
<rect x="701.8" y="0" width="2.4" height="25" fill="#9c9c9e"/>
<rect x="707.0" y="16" width="2" height="9" fill="#9c9c9e"/>
<rect x="711.9" y="16" width="2" height="9" fill="#9c9c9e"/>
<rect x="716.8" y="16" width="2" height="9" fill="#9c9c9e"/>
<rect x="721.8" y="16" width="2" height="9" fill="#9c9c9e"/>
<rect x="726.7" y="8" width="2" height="17" fill="#9c9c9e"/>
<rect x="731.6" y="16" width="2" height="9" fill="#9c9c9e"/>
<rect x="736.5" y="16" width="2" height="9" fill="#9c9c9e"/>
<rect x="741.4" y="16" width="2" height="9" fill="#9c9c9e"/>
<rect x="746.4" y="16" width="2" height="9" fill="#9c9c9e"/>
<rect x="751.1" y="0" width="2.4" height="25" fill="#9c9c9e"/>
<rect x="756.2" y="16" width="2" height="9" fill="#9c9c9e"/>
<rect x="761.1" y="16" width="2" height="9" fill="#9c9c9e"/>
<rect x="766.1" y="16" width="2" height="9" fill="#9c9c9e"/>
<rect x="771.0" y="16" width="2" height="9" fill="#9c9c9e"/>
<rect x="775.9" y="8" width="2" height="17" fill="#9c9c9e"/>
<rect x="780.8" y="16" width="2" height="9" fill="#9c9c9e"/>
<rect x="785.8" y="16" width="2" height="9" fill="#9c9c9e"/>
<rect x="790.7" y="16" width="2" height="9" fill="#9c9c9e"/>
<rect x="795.6" y="16" width="2" height="9" fill="#9c9c9e"/>
<rect x="800.3" y="0" width="2.4" height="25" fill="#9c9c9e"/>
<rect x="805.5" y="16" width="2" height="9" fill="#9c9c9e"/>
<rect x="810.4" y="16" width="2" height="9" fill="#9c9c9e"/>
<rect x="815.3" y="16" width="2" height="9" fill="#9c9c9e"/>
<rect x="820.2" y="16" width="2" height="9" fill="#9c9c9e"/>
<rect x="825.2" y="8" width="2" height="17" fill="#9c9c9e"/>
<rect x="830.1" y="16" width="2" height="9" fill="#9c9c9e"/>
<rect x="835.0" y="16" width="2" height="9" fill="#9c9c9e"/>
<rect x="839.9" y="16" width="2" height="9" fill="#9c9c9e"/>
<rect x="844.9" y="16" width="2" height="9" fill="#9c9c9e"/>
<rect x="849.6" y="0" width="2.4" height="25" fill="#9c9c9e"/>
<rect x="854.7" y="16" width="2" height="9" fill="#9c9c9e"/>
<rect x="859.6" y="16" width="2" height="9" fill="#9c9c9e"/>
<rect x="864.6" y="16" width="2" height="9" fill="#9c9c9e"/>
<rect x="869.5" y="16" width="2" height="9" fill="#9c9c9e"/>
<rect x="874.4" y="8" width="2" height="17" fill="#9c9c9e"/>
<rect x="879.3" y="16" width="2" height="9" fill="#9c9c9e"/>
<rect x="884.3" y="16" width="2" height="9" fill="#9c9c9e"/>
<rect x="889.2" y="16" width="2" height="9" fill="#9c9c9e"/>
<rect x="894.1" y="16" width="2" height="9" fill="#9c9c9e"/>
<rect x="898.8" y="0" width="2.4" height="25" fill="#9c9c9e"/>
<rect x="904.0" y="16" width="2" height="9" fill="#9c9c9e"/>
<rect x="908.9" y="16" width="2" height="9" fill="#9c9c9e"/>
<rect x="913.8" y="16" width="2" height="9" fill="#9c9c9e"/>
<rect x="918.8" y="16" width="2" height="9" fill="#9c9c9e"/>
<rect x="923.7" y="8" width="2" height="17" fill="#9c9c9e"/>
<rect x="928.6" y="16" width="2" height="9" fill="#9c9c9e"/>
<rect x="933.5" y="16" width="2" height="9" fill="#9c9c9e"/>
<rect x="938.4" y="16" width="2" height="9" fill="#9c9c9e"/>
<rect x="943.4" y="16" width="2" height="9" fill="#9c9c9e"/>
<rect x="948.1" y="0" width="2.4" height="25" fill="#9c9c9e"/>
<rect x="953.2" y="16" width="2" height="9" fill="#9c9c9e"/>
<rect x="958.1" y="16" width="2" height="9" fill="#9c9c9e"/>
<rect x="963.1" y="16" width="2" height="9" fill="#9c9c9e"/>
<rect x="968.0" y="16" width="2" height="9" fill="#9c9c9e"/>
<rect x="972.9" y="8" width="2" height="17" fill="#9c9c9e"/>
<rect x="977.8" y="16" width="2" height="9" fill="#9c9c9e"/>
<rect x="982.8" y="16" width="2" height="9" fill="#9c9c9e"/>
<rect x="987.7" y="16" width="2" height="9" fill="#9c9c9e"/>
<rect x="992.6" y="16" width="2" height="9" fill="#9c9c9e"/>
<rect x="997.3" y="0" width="2.4" height="25" fill="#9c9c9e"/>
<rect x="1002.5" y="16" width="2" height="9" fill="#9c9c9e"/>
<rect x="1007.4" y="16" width="2" height="9" fill="#9c9c9e"/>
<rect x="1012.3" y="16" width="2" height="9" fill="#9c9c9e"/>
<rect x="1017.2" y="16" width="2" height="9" fill="#9c9c9e"/>
<rect x="1022.2" y="8" width="2" height="17" fill="#9c9c9e"/>
<rect x="1027.1" y="16" width="2" height="9" fill="#9c9c9e"/>
<rect x="1032.0" y="16" width="2" height="9" fill="#9c9c9e"/>
<rect x="1037.0" y="16" width="2" height="9" fill="#9c9c9e"/>
<rect x="1041.9" y="16" width="2" height="9" fill="#9c9c9e"/>
<rect x="1046.6" y="0" width="2.4" height="25" fill="#9c9c9e"/>
<rect x="1051.7" y="16" width="2" height="9" fill="#9c9c9e"/>
<rect x="1056.6" y="16" width="2" height="9" fill="#9c9c9e"/>
<rect x="1061.6" y="16" width="2" height="9" fill="#9c9c9e"/>
<rect x="1066.5" y="16" width="2" height="9" fill="#9c9c9e"/>
<rect x="1071.4" y="8" width="2" height="17" fill="#9c9c9e"/>
<rect x="1076.3" y="16" width="2" height="9" fill="#9c9c9e"/>
<rect x="1081.3" y="16" width="2" height="9" fill="#9c9c9e"/>
<rect x="1086.2" y="16" width="2" height="9" fill="#9c9c9e"/>
<rect x="1091.1" y="16" width="2" height="9" fill="#9c9c9e"/>
<rect x="1095.8" y="0" width="2.4" height="25" fill="#9c9c9e"/>
<rect x="1101.0" y="16" width="2" height="9" fill="#9c9c9e"/>
<rect x="1105.9" y="16" width="2" height="9" fill="#9c9c9e"/>
<rect x="1110.8" y="16" width="2" height="9" fill="#9c9c9e"/>
<rect x="1115.8" y="16" width="2" height="9" fill="#9c9c9e"/>
<rect x="1120.7" y="8" width="2" height="17" fill="#9c9c9e"/>
<rect x="1125.6" y="16" width="2" height="9" fill="#9c9c9e"/>
<rect x="1130.5" y="16" width="2" height="9" fill="#9c9c9e"/>
<rect x="1135.5" y="16" width="2" height="9" fill="#9c9c9e"/>
<rect x="1140.4" y="16" width="2" height="9" fill="#9c9c9e"/>
<rect x="1145.1" y="0" width="2.4" height="25" fill="#9c9c9e"/>
<rect x="1150.2" y="16" width="2" height="9" fill="#9c9c9e"/>
<rect x="1155.1" y="16" width="2" height="9" fill="#9c9c9e"/>
<rect x="1160.1" y="16" width="2" height="9" fill="#9c9c9e"/>
<rect x="1165.0" y="16" width="2" height="9" fill="#9c9c9e"/>
<rect x="1169.9" y="8" width="2" height="17" fill="#9c9c9e"/>
<rect x="1174.8" y="16" width="2" height="9" fill="#9c9c9e"/>
<rect x="1179.8" y="16" width="2" height="9" fill="#9c9c9e"/>
<rect x="1184.7" y="16" width="2" height="9" fill="#9c9c9e"/>
<rect x="1189.6" y="16" width="2" height="9" fill="#9c9c9e"/>
<rect x="1194.3" y="0" width="2.4" height="25" fill="#9c9c9e"/>
<rect x="1199.5" y="16" width="2" height="9" fill="#9c9c9e"/>
<rect x="1204.4" y="16" width="2" height="9" fill="#9c9c9e"/>
<rect x="1209.3" y="16" width="2" height="9" fill="#9c9c9e"/>
<rect x="1214.2" y="16" width="2" height="9" fill="#9c9c9e"/>
<rect x="1219.2" y="8" width="2" height="17" fill="#9c9c9e"/>
<rect x="1224.1" y="16" width="2" height="9" fill="#9c9c9e"/>
<rect x="1229.0" y="16" width="2" height="9" fill="#9c9c9e"/>
<rect x="1234.0" y="16" width="2" height="9" fill="#9c9c9e"/>
<rect x="1238.9" y="16" width="2" height="9" fill="#9c9c9e"/>
<rect x="1243.6" y="0" width="2.4" height="25" fill="#9c9c9e"/>
<rect x="1248.7" y="16" width="2" height="9" fill="#9c9c9e"/>
<rect x="1253.6" y="16" width="2" height="9" fill="#9c9c9e"/>
<rect x="1258.6" y="16" width="2" height="9" fill="#9c9c9e"/>
<rect x="1263.5" y="16" width="2" height="9" fill="#9c9c9e"/>
<rect x="1268.4" y="8" width="2" height="17" fill="#9c9c9e"/>
<rect x="1273.3" y="16" width="2" height="9" fill="#9c9c9e"/>
<rect x="1278.3" y="16" width="2" height="9" fill="#9c9c9e"/>
<rect x="1283.2" y="16" width="2" height="9" fill="#9c9c9e"/>
<rect x="1288.1" y="16" width="2" height="9" fill="#9c9c9e"/>
<rect x="1292.8" y="0" width="2.4" height="25" fill="#9c9c9e"/>
<rect x="1298.0" y="16" width="2" height="9" fill="#9c9c9e"/>
<rect x="1302.9" y="16" width="2" height="9" fill="#9c9c9e"/>
<rect x="1307.8" y="16" width="2" height="9" fill="#9c9c9e"/>
<rect x="1312.8" y="16" width="2" height="9" fill="#9c9c9e"/>
<rect x="1317.7" y="8" width="2" height="17" fill="#9c9c9e"/>
<rect x="1322.6" y="16" width="2" height="9" fill="#9c9c9e"/>
<rect x="1327.5" y="16" width="2" height="9" fill="#9c9c9e"/>
<rect x="1332.5" y="16" width="2" height="9" fill="#9c9c9e"/>
<rect x="1337.4" y="16" width="2" height="9" fill="#9c9c9e"/>
<rect x="1342.1" y="0" width="2.4" height="25" fill="#9c9c9e"/>
<rect x="1347.2" y="16" width="2" height="9" fill="#9c9c9e"/>
<rect x="1352.1" y="16" width="2" height="9" fill="#9c9c9e"/>
<rect x="1357.1" y="16" width="2" height="9" fill="#9c9c9e"/>
<rect x="1362.0" y="16" width="2" height="9" fill="#9c9c9e"/>
<rect x="1366.9" y="8" width="2" height="17" fill="#9c9c9e"/>
<rect x="1371.8" y="16" width="2" height="9" fill="#9c9c9e"/>
<rect x="1376.8" y="16" width="2" height="9" fill="#9c9c9e"/>
<rect x="1381.7" y="16" width="2" height="9" fill="#9c9c9e"/>
<rect x="1386.6" y="16" width="2" height="9" fill="#9c9c9e"/>
<rect x="1391.3" y="0" width="2.4" height="25" fill="#9c9c9e"/>
<rect x="1396.5" y="16" width="2" height="9" fill="#9c9c9e"/>
<rect x="1401.4" y="16" width="2" height="9" fill="#9c9c9e"/>
<rect x="1406.3" y="16" width="2" height="9" fill="#9c9c9e"/>
<rect x="1411.2" y="16" width="2" height="9" fill="#9c9c9e"/>
<rect x="1416.2" y="8" width="2" height="17" fill="#9c9c9e"/>
<rect x="1421.1" y="16" width="2" height="9" fill="#9c9c9e"/>
<rect x="1426.0" y="16" width="2" height="9" fill="#9c9c9e"/>
<rect x="1431.0" y="16" width="2" height="9" fill="#9c9c9e"/>
<rect x="1435.9" y="16" width="2" height="9" fill="#9c9c9e"/>
<rect x="1440.6" y="0" width="2.4" height="25" fill="#9c9c9e"/>
<rect x="1445.7" y="16" width="2" height="9" fill="#9c9c9e"/>
<rect x="1450.6" y="16" width="2" height="9" fill="#9c9c9e"/>
<rect x="1455.6" y="16" width="2" height="9" fill="#9c9c9e"/>
<rect x="1460.5" y="16" width="2" height="9" fill="#9c9c9e"/>
<rect x="1465.4" y="8" width="2" height="17" fill="#9c9c9e"/>
<rect x="1470.3" y="16" width="2" height="9" fill="#9c9c9e"/>
<rect x="1475.3" y="16" width="2" height="9" fill="#9c9c9e"/>
<rect x="1480.2" y="16" width="2" height="9" fill="#9c9c9e"/>
<rect x="1485.1" y="16" width="2" height="9" fill="#9c9c9e"/>
<rect x="1489.8" y="0" width="2.4" height="25" fill="#9c9c9e"/>
<rect x="1495.0" y="16" width="2" height="9" fill="#9c9c9e"/>
<rect x="1499.9" y="16" width="2" height="9" fill="#9c9c9e"/>
<rect x="1504.8" y="16" width="2" height="9" fill="#9c9c9e"/>
<rect x="1509.8" y="16" width="2" height="9" fill="#9c9c9e"/>
<text x="18.9" y="12.3" font-family="Liberation Sans" font-weight="bold" font-size="11.6" fill="#f4f4f4" letter-spacing="-0.25">-300.0</text>
<text x="68.1" y="12.3" font-family="Liberation Sans" font-weight="bold" font-size="11.6" fill="#f4f4f4" letter-spacing="-0.25">-200.0</text>
<text x="117.4" y="12.3" font-family="Liberation Sans" font-weight="bold" font-size="11.6" fill="#f4f4f4" letter-spacing="-0.25">-100.0</text>
<text x="166.6" y="12.3" font-family="Liberation Sans" font-weight="bold" font-size="11.6" fill="#f4f4f4" letter-spacing="-0.25">0.0</text>
<text x="215.9" y="12.3" font-family="Liberation Sans" font-weight="bold" font-size="11.6" fill="#f4f4f4" letter-spacing="-0.25">100.0</text>
<text x="265.1" y="12.3" font-family="Liberation Sans" font-weight="bold" font-size="11.6" fill="#f4f4f4" letter-spacing="-0.25">200.0</text>
<text x="314.4" y="12.3" font-family="Liberation Sans" font-weight="bold" font-size="11.6" fill="#f4f4f4" letter-spacing="-0.25">300.0</text>
<text x="363.6" y="12.3" font-family="Liberation Sans" font-weight="bold" font-size="11.6" fill="#f4f4f4" letter-spacing="-0.25">400.0</text>
<text x="412.9" y="12.3" font-family="Liberation Sans" font-weight="bold" font-size="11.6" fill="#f4f4f4" letter-spacing="-0.25">500.0</text>
<text x="462.1" y="12.3" font-family="Liberation Sans" font-weight="bold" font-size="11.6" fill="#f4f4f4" letter-spacing="-0.25">600.0</text>
<text x="511.4" y="12.3" font-family="Liberation Sans" font-weight="bold" font-size="11.6" fill="#f4f4f4" letter-spacing="-0.25">700.0</text>
<text x="560.6" y="12.3" font-family="Liberation Sans" font-weight="bold" font-size="11.6" fill="#f4f4f4" letter-spacing="-0.25">800.0</text>
<text x="609.8" y="12.3" font-family="Liberation Sans" font-weight="bold" font-size="11.6" fill="#f4f4f4" letter-spacing="-0.25">900.0</text>
<text x="659.1" y="12.3" font-family="Liberation Sans" font-weight="bold" font-size="11.6" fill="#f4f4f4" letter-spacing="-0.25">1000.0</text>
<text x="708.3" y="12.3" font-family="Liberation Sans" font-weight="bold" font-size="11.6" fill="#f4f4f4" letter-spacing="-0.25">1100.0</text>
<text x="757.6" y="12.3" font-family="Liberation Sans" font-weight="bold" font-size="11.6" fill="#f4f4f4" letter-spacing="-0.25">1200.0</text>
<text x="806.8" y="12.3" font-family="Liberation Sans" font-weight="bold" font-size="11.6" fill="#f4f4f4" letter-spacing="-0.25">1300.0</text>
<text x="856.1" y="12.3" font-family="Liberation Sans" font-weight="bold" font-size="11.6" fill="#f4f4f4" letter-spacing="-0.25">1400.0</text>
<text x="905.3" y="12.3" font-family="Liberation Sans" font-weight="bold" font-size="11.6" fill="#f4f4f4" letter-spacing="-0.25">1500.0</text>
<text x="954.6" y="12.3" font-family="Liberation Sans" font-weight="bold" font-size="11.6" fill="#f4f4f4" letter-spacing="-0.25">1600.0</text>
<text x="1003.8" y="12.3" font-family="Liberation Sans" font-weight="bold" font-size="11.6" fill="#f4f4f4" letter-spacing="-0.25">1700.0</text>
<text x="1053.1" y="12.3" font-family="Liberation Sans" font-weight="bold" font-size="11.6" fill="#f4f4f4" letter-spacing="-0.25">1800.0</text>
<text x="1102.3" y="12.3" font-family="Liberation Sans" font-weight="bold" font-size="11.6" fill="#f4f4f4" letter-spacing="-0.25">1900.0</text>
<text x="1151.6" y="12.3" font-family="Liberation Sans" font-weight="bold" font-size="11.6" fill="#f4f4f4" letter-spacing="-0.25">2000.0</text>
<text x="1200.8" y="12.3" font-family="Liberation Sans" font-weight="bold" font-size="11.6" fill="#f4f4f4" letter-spacing="-0.25">2100.0</text>
<text x="1250.1" y="12.3" font-family="Liberation Sans" font-weight="bold" font-size="11.6" fill="#f4f4f4" letter-spacing="-0.25">2200.0</text>
<text x="1299.3" y="12.3" font-family="Liberation Sans" font-weight="bold" font-size="11.6" fill="#f4f4f4" letter-spacing="-0.25">2300.0</text>
<text x="1348.6" y="12.3" font-family="Liberation Sans" font-weight="bold" font-size="11.6" fill="#f4f4f4" letter-spacing="-0.25">2400.0</text>
<text x="1397.8" y="12.3" font-family="Liberation Sans" font-weight="bold" font-size="11.6" fill="#f4f4f4" letter-spacing="-0.25">2500.0</text>
<text x="1447.1" y="12.3" font-family="Liberation Sans" font-weight="bold" font-size="11.6" fill="#f4f4f4" letter-spacing="-0.25">2600.0</text>
<text x="1496.3" y="12.3" font-family="Liberation Sans" font-weight="bold" font-size="11.6" fill="#f4f4f4" letter-spacing="-0.25">2700.0</text>
<rect x="0" y="0" width="19" height="25" fill="#2d2c31"/>
<rect x="4" y="3" width="15" height="2" fill="#9c9c9e"/>
<rect x="10" y="8" width="9" height="2" fill="#9c9c9e"/><rect x="10" y="13" width="9" height="2" fill="#9c9c9e"/><rect x="10" y="18" width="9" height="2" fill="#9c9c9e"/><rect x="10" y="23" width="9" height="2" fill="#9c9c9e"/>
</svg>
<svg class="a" style="left:0;top:148px" width="19" height="959">
<rect width="19" height="959" fill="#2d2c31"/>
<text transform="translate(-6.8,-44.2) rotate(90)" font-family="Liberation Sans" font-weight="normal" font-size="15" fill="#f4f4f4" letter-spacing="2.4">-200.0</text>
<rect x="0" y="1.1" width="19" height="2" fill="#9c9c9e"/>
<rect x="10" y="6.2" width="9" height="1.6" fill="#9c9c9e"/>
<rect x="10" y="11.1" width="9" height="1.6" fill="#9c9c9e"/>
<rect x="10" y="16.0" width="9" height="1.6" fill="#9c9c9e"/>
<rect x="10" y="21.0" width="9" height="1.6" fill="#9c9c9e"/>
<rect x="2.5" y="25.8" width="16.5" height="1.8" fill="#9c9c9e"/>
<rect x="10" y="30.8" width="9" height="1.6" fill="#9c9c9e"/>
<rect x="10" y="35.7" width="9" height="1.6" fill="#9c9c9e"/>
<rect x="10" y="40.7" width="9" height="1.6" fill="#9c9c9e"/>
<rect x="10" y="45.6" width="9" height="1.6" fill="#9c9c9e"/>
<text transform="translate(-6.8,5.1) rotate(90)" font-family="Liberation Sans" font-weight="normal" font-size="15" fill="#f4f4f4" letter-spacing="2.4">-100.0</text>
<rect x="0" y="50.3" width="19" height="2" fill="#9c9c9e"/>
<rect x="10" y="55.4" width="9" height="1.6" fill="#9c9c9e"/>
<rect x="10" y="60.4" width="9" height="1.6" fill="#9c9c9e"/>
<rect x="10" y="65.3" width="9" height="1.6" fill="#9c9c9e"/>
<rect x="10" y="70.2" width="9" height="1.6" fill="#9c9c9e"/>
<rect x="2.5" y="75.0" width="16.5" height="1.8" fill="#9c9c9e"/>
<rect x="10" y="80.1" width="9" height="1.6" fill="#9c9c9e"/>
<rect x="10" y="85.0" width="9" height="1.6" fill="#9c9c9e"/>
<rect x="10" y="89.9" width="9" height="1.6" fill="#9c9c9e"/>
<rect x="10" y="94.8" width="9" height="1.6" fill="#9c9c9e"/>
<text transform="translate(-6.8,54.3) rotate(90)" font-family="Liberation Sans" font-weight="normal" font-size="15" fill="#f4f4f4" letter-spacing="2.4">0.0</text>
<rect x="0" y="99.6" width="19" height="2" fill="#9c9c9e"/>
<rect x="10" y="104.7" width="9" height="1.6" fill="#9c9c9e"/>
<rect x="10" y="109.6" width="9" height="1.6" fill="#9c9c9e"/>
<rect x="10" y="114.5" width="9" height="1.6" fill="#9c9c9e"/>
<rect x="10" y="119.5" width="9" height="1.6" fill="#9c9c9e"/>
<rect x="2.5" y="124.3" width="16.5" height="1.8" fill="#9c9c9e"/>
<rect x="10" y="129.3" width="9" height="1.6" fill="#9c9c9e"/>
<rect x="10" y="134.2" width="9" height="1.6" fill="#9c9c9e"/>
<rect x="10" y="139.2" width="9" height="1.6" fill="#9c9c9e"/>
<rect x="10" y="144.1" width="9" height="1.6" fill="#9c9c9e"/>
<text transform="translate(-6.8,103.6) rotate(90)" font-family="Liberation Sans" font-weight="normal" font-size="15" fill="#f4f4f4" letter-spacing="2.4">100.0</text>
<rect x="0" y="148.8" width="19" height="2" fill="#9c9c9e"/>
<rect x="10" y="153.9" width="9" height="1.6" fill="#9c9c9e"/>
<rect x="10" y="158.8" width="9" height="1.6" fill="#9c9c9e"/>
<rect x="10" y="163.8" width="9" height="1.6" fill="#9c9c9e"/>
<rect x="10" y="168.7" width="9" height="1.6" fill="#9c9c9e"/>
<rect x="2.5" y="173.5" width="16.5" height="1.8" fill="#9c9c9e"/>
<rect x="10" y="178.6" width="9" height="1.6" fill="#9c9c9e"/>
<rect x="10" y="183.5" width="9" height="1.6" fill="#9c9c9e"/>
<rect x="10" y="188.4" width="9" height="1.6" fill="#9c9c9e"/>
<rect x="10" y="193.3" width="9" height="1.6" fill="#9c9c9e"/>
<text transform="translate(-6.8,152.8) rotate(90)" font-family="Liberation Sans" font-weight="normal" font-size="15" fill="#f4f4f4" letter-spacing="2.4">200.0</text>
<rect x="0" y="198.1" width="19" height="2" fill="#9c9c9e"/>
<rect x="10" y="203.2" width="9" height="1.6" fill="#9c9c9e"/>
<rect x="10" y="208.1" width="9" height="1.6" fill="#9c9c9e"/>
<rect x="10" y="213.0" width="9" height="1.6" fill="#9c9c9e"/>
<rect x="10" y="217.9" width="9" height="1.6" fill="#9c9c9e"/>
<rect x="2.5" y="222.8" width="16.5" height="1.8" fill="#9c9c9e"/>
<rect x="10" y="227.8" width="9" height="1.6" fill="#9c9c9e"/>
<rect x="10" y="232.7" width="9" height="1.6" fill="#9c9c9e"/>
<rect x="10" y="237.7" width="9" height="1.6" fill="#9c9c9e"/>
<rect x="10" y="242.6" width="9" height="1.6" fill="#9c9c9e"/>
<text transform="translate(-6.8,202.1) rotate(90)" font-family="Liberation Sans" font-weight="normal" font-size="15" fill="#f4f4f4" letter-spacing="2.4">300.0</text>
<rect x="0" y="247.3" width="19" height="2" fill="#9c9c9e"/>
<rect x="10" y="252.4" width="9" height="1.6" fill="#9c9c9e"/>
<rect x="10" y="257.4" width="9" height="1.6" fill="#9c9c9e"/>
<rect x="10" y="262.3" width="9" height="1.6" fill="#9c9c9e"/>
<rect x="10" y="267.2" width="9" height="1.6" fill="#9c9c9e"/>
<rect x="2.5" y="272.0" width="16.5" height="1.8" fill="#9c9c9e"/>
<rect x="10" y="277.1" width="9" height="1.6" fill="#9c9c9e"/>
<rect x="10" y="282.0" width="9" height="1.6" fill="#9c9c9e"/>
<rect x="10" y="286.9" width="9" height="1.6" fill="#9c9c9e"/>
<rect x="10" y="291.8" width="9" height="1.6" fill="#9c9c9e"/>
<text transform="translate(-6.8,251.3) rotate(90)" font-family="Liberation Sans" font-weight="normal" font-size="15" fill="#f4f4f4" letter-spacing="2.4">400.0</text>
<rect x="0" y="296.6" width="19" height="2" fill="#9c9c9e"/>
<rect x="10" y="301.7" width="9" height="1.6" fill="#9c9c9e"/>
<rect x="10" y="306.6" width="9" height="1.6" fill="#9c9c9e"/>
<rect x="10" y="311.5" width="9" height="1.6" fill="#9c9c9e"/>
<rect x="10" y="316.4" width="9" height="1.6" fill="#9c9c9e"/>
<rect x="2.5" y="321.3" width="16.5" height="1.8" fill="#9c9c9e"/>
<rect x="10" y="326.3" width="9" height="1.6" fill="#9c9c9e"/>
<rect x="10" y="331.2" width="9" height="1.6" fill="#9c9c9e"/>
<rect x="10" y="336.1" width="9" height="1.6" fill="#9c9c9e"/>
<rect x="10" y="341.1" width="9" height="1.6" fill="#9c9c9e"/>
<text transform="translate(-6.8,300.6) rotate(90)" font-family="Liberation Sans" font-weight="normal" font-size="15" fill="#f4f4f4" letter-spacing="2.4">500.0</text>
<rect x="0" y="345.8" width="19" height="2" fill="#9c9c9e"/>
<rect x="10" y="350.9" width="9" height="1.6" fill="#9c9c9e"/>
<rect x="10" y="355.9" width="9" height="1.6" fill="#9c9c9e"/>
<rect x="10" y="360.8" width="9" height="1.6" fill="#9c9c9e"/>
<rect x="10" y="365.7" width="9" height="1.6" fill="#9c9c9e"/>
<rect x="2.5" y="370.5" width="16.5" height="1.8" fill="#9c9c9e"/>
<rect x="10" y="375.6" width="9" height="1.6" fill="#9c9c9e"/>
<rect x="10" y="380.5" width="9" height="1.6" fill="#9c9c9e"/>
<rect x="10" y="385.4" width="9" height="1.6" fill="#9c9c9e"/>
<rect x="10" y="390.3" width="9" height="1.6" fill="#9c9c9e"/>
<text transform="translate(-6.8,349.8) rotate(90)" font-family="Liberation Sans" font-weight="normal" font-size="15" fill="#f4f4f4" letter-spacing="2.4">600.0</text>
<rect x="0" y="395.1" width="19" height="2" fill="#9c9c9e"/>
<rect x="10" y="400.2" width="9" height="1.6" fill="#9c9c9e"/>
<rect x="10" y="405.1" width="9" height="1.6" fill="#9c9c9e"/>
<rect x="10" y="410.0" width="9" height="1.6" fill="#9c9c9e"/>
<rect x="10" y="414.9" width="9" height="1.6" fill="#9c9c9e"/>
<rect x="2.5" y="419.8" width="16.5" height="1.8" fill="#9c9c9e"/>
<rect x="10" y="424.8" width="9" height="1.6" fill="#9c9c9e"/>
<rect x="10" y="429.7" width="9" height="1.6" fill="#9c9c9e"/>
<rect x="10" y="434.6" width="9" height="1.6" fill="#9c9c9e"/>
<rect x="10" y="439.6" width="9" height="1.6" fill="#9c9c9e"/>
<text transform="translate(-6.8,399.1) rotate(90)" font-family="Liberation Sans" font-weight="normal" font-size="15" fill="#f4f4f4" letter-spacing="2.4">700.0</text>
<rect x="0" y="444.3" width="19" height="2" fill="#9c9c9e"/>
<rect x="10" y="449.4" width="9" height="1.6" fill="#9c9c9e"/>
<rect x="10" y="454.4" width="9" height="1.6" fill="#9c9c9e"/>
<rect x="10" y="459.3" width="9" height="1.6" fill="#9c9c9e"/>
<rect x="10" y="464.2" width="9" height="1.6" fill="#9c9c9e"/>
<rect x="2.5" y="469.0" width="16.5" height="1.8" fill="#9c9c9e"/>
<rect x="10" y="474.1" width="9" height="1.6" fill="#9c9c9e"/>
<rect x="10" y="479.0" width="9" height="1.6" fill="#9c9c9e"/>
<rect x="10" y="483.9" width="9" height="1.6" fill="#9c9c9e"/>
<rect x="10" y="488.8" width="9" height="1.6" fill="#9c9c9e"/>
<text transform="translate(-6.8,448.3) rotate(90)" font-family="Liberation Sans" font-weight="normal" font-size="15" fill="#f4f4f4" letter-spacing="2.4">800.0</text>
<rect x="0" y="493.6" width="19" height="2" fill="#9c9c9e"/>
<rect x="10" y="498.7" width="9" height="1.6" fill="#9c9c9e"/>
<rect x="10" y="503.6" width="9" height="1.6" fill="#9c9c9e"/>
<rect x="10" y="508.5" width="9" height="1.6" fill="#9c9c9e"/>
<rect x="10" y="513.5" width="9" height="1.6" fill="#9c9c9e"/>
<rect x="2.5" y="518.3" width="16.5" height="1.8" fill="#9c9c9e"/>
<rect x="10" y="523.3" width="9" height="1.6" fill="#9c9c9e"/>
<rect x="10" y="528.2" width="9" height="1.6" fill="#9c9c9e"/>
<rect x="10" y="533.2" width="9" height="1.6" fill="#9c9c9e"/>
<rect x="10" y="538.1" width="9" height="1.6" fill="#9c9c9e"/>
<text transform="translate(-6.8,497.6) rotate(90)" font-family="Liberation Sans" font-weight="normal" font-size="15" fill="#f4f4f4" letter-spacing="2.4">900.0</text>
<rect x="0" y="542.8" width="19" height="2" fill="#9c9c9e"/>
<rect x="10" y="547.9" width="9" height="1.6" fill="#9c9c9e"/>
<rect x="10" y="552.9" width="9" height="1.6" fill="#9c9c9e"/>
<rect x="10" y="557.8" width="9" height="1.6" fill="#9c9c9e"/>
<rect x="10" y="562.7" width="9" height="1.6" fill="#9c9c9e"/>
<rect x="2.5" y="567.5" width="16.5" height="1.8" fill="#9c9c9e"/>
<rect x="10" y="572.5" width="9" height="1.6" fill="#9c9c9e"/>
<rect x="10" y="577.5" width="9" height="1.6" fill="#9c9c9e"/>
<rect x="10" y="582.4" width="9" height="1.6" fill="#9c9c9e"/>
<rect x="10" y="587.3" width="9" height="1.6" fill="#9c9c9e"/>
<text transform="translate(-6.8,546.8) rotate(90)" font-family="Liberation Sans" font-weight="normal" font-size="15" fill="#f4f4f4" letter-spacing="2.4">1000.0</text>
<rect x="0" y="592.0" width="19" height="2" fill="#9c9c9e"/>
<rect x="10" y="597.2" width="9" height="1.6" fill="#9c9c9e"/>
<rect x="10" y="602.1" width="9" height="1.6" fill="#9c9c9e"/>
<rect x="10" y="607.0" width="9" height="1.6" fill="#9c9c9e"/>
<rect x="10" y="612.0" width="9" height="1.6" fill="#9c9c9e"/>
<rect x="2.5" y="616.8" width="16.5" height="1.8" fill="#9c9c9e"/>
<rect x="10" y="621.8" width="9" height="1.6" fill="#9c9c9e"/>
<rect x="10" y="626.7" width="9" height="1.6" fill="#9c9c9e"/>
<rect x="10" y="631.6" width="9" height="1.6" fill="#9c9c9e"/>
<rect x="10" y="636.6" width="9" height="1.6" fill="#9c9c9e"/>
<text transform="translate(-6.8,596.0) rotate(90)" font-family="Liberation Sans" font-weight="normal" font-size="15" fill="#f4f4f4" letter-spacing="2.4">1100.0</text>
<rect x="0" y="641.3" width="19" height="2" fill="#9c9c9e"/>
<rect x="10" y="646.4" width="9" height="1.6" fill="#9c9c9e"/>
<rect x="10" y="651.4" width="9" height="1.6" fill="#9c9c9e"/>
<rect x="10" y="656.3" width="9" height="1.6" fill="#9c9c9e"/>
<rect x="10" y="661.2" width="9" height="1.6" fill="#9c9c9e"/>
<rect x="2.5" y="666.0" width="16.5" height="1.8" fill="#9c9c9e"/>
<rect x="10" y="671.0" width="9" height="1.6" fill="#9c9c9e"/>
<rect x="10" y="676.0" width="9" height="1.6" fill="#9c9c9e"/>
<rect x="10" y="680.9" width="9" height="1.6" fill="#9c9c9e"/>
<rect x="10" y="685.8" width="9" height="1.6" fill="#9c9c9e"/>
<text transform="translate(-6.8,645.3) rotate(90)" font-family="Liberation Sans" font-weight="normal" font-size="15" fill="#f4f4f4" letter-spacing="2.4">1200.0</text>
<rect x="0" y="690.5" width="19" height="2" fill="#9c9c9e"/>
<rect x="10" y="695.7" width="9" height="1.6" fill="#9c9c9e"/>
<rect x="10" y="700.6" width="9" height="1.6" fill="#9c9c9e"/>
<rect x="10" y="705.5" width="9" height="1.6" fill="#9c9c9e"/>
<rect x="10" y="710.5" width="9" height="1.6" fill="#9c9c9e"/>
<rect x="2.5" y="715.3" width="16.5" height="1.8" fill="#9c9c9e"/>
<rect x="10" y="720.3" width="9" height="1.6" fill="#9c9c9e"/>
<rect x="10" y="725.2" width="9" height="1.6" fill="#9c9c9e"/>
<rect x="10" y="730.1" width="9" height="1.6" fill="#9c9c9e"/>
<rect x="10" y="735.1" width="9" height="1.6" fill="#9c9c9e"/>
<text transform="translate(-6.8,694.5) rotate(90)" font-family="Liberation Sans" font-weight="normal" font-size="15" fill="#f4f4f4" letter-spacing="2.4">1300.0</text>
<rect x="0" y="739.8" width="19" height="2" fill="#9c9c9e"/>
<rect x="10" y="744.9" width="9" height="1.6" fill="#9c9c9e"/>
<rect x="10" y="749.9" width="9" height="1.6" fill="#9c9c9e"/>
<rect x="10" y="754.8" width="9" height="1.6" fill="#9c9c9e"/>
<rect x="10" y="759.7" width="9" height="1.6" fill="#9c9c9e"/>
<rect x="2.5" y="764.5" width="16.5" height="1.8" fill="#9c9c9e"/>
<rect x="10" y="769.5" width="9" height="1.6" fill="#9c9c9e"/>
<rect x="10" y="774.5" width="9" height="1.6" fill="#9c9c9e"/>
<rect x="10" y="779.4" width="9" height="1.6" fill="#9c9c9e"/>
<rect x="10" y="784.3" width="9" height="1.6" fill="#9c9c9e"/>
<text transform="translate(-6.8,743.8) rotate(90)" font-family="Liberation Sans" font-weight="normal" font-size="15" fill="#f4f4f4" letter-spacing="2.4">1400.0</text>
<rect x="0" y="789.0" width="19" height="2" fill="#9c9c9e"/>
<rect x="10" y="794.2" width="9" height="1.6" fill="#9c9c9e"/>
<rect x="10" y="799.1" width="9" height="1.6" fill="#9c9c9e"/>
<rect x="10" y="804.0" width="9" height="1.6" fill="#9c9c9e"/>
<rect x="10" y="809.0" width="9" height="1.6" fill="#9c9c9e"/>
<rect x="2.5" y="813.8" width="16.5" height="1.8" fill="#9c9c9e"/>
<rect x="10" y="818.8" width="9" height="1.6" fill="#9c9c9e"/>
<rect x="10" y="823.7" width="9" height="1.6" fill="#9c9c9e"/>
<rect x="10" y="828.6" width="9" height="1.6" fill="#9c9c9e"/>
<rect x="10" y="833.6" width="9" height="1.6" fill="#9c9c9e"/>
<text transform="translate(-6.8,793.0) rotate(90)" font-family="Liberation Sans" font-weight="normal" font-size="15" fill="#f4f4f4" letter-spacing="2.4">1500.0</text>
<rect x="0" y="838.3" width="19" height="2" fill="#9c9c9e"/>
<rect x="10" y="843.4" width="9" height="1.6" fill="#9c9c9e"/>
<rect x="10" y="848.4" width="9" height="1.6" fill="#9c9c9e"/>
<rect x="10" y="853.3" width="9" height="1.6" fill="#9c9c9e"/>
<rect x="10" y="858.2" width="9" height="1.6" fill="#9c9c9e"/>
<rect x="2.5" y="863.0" width="16.5" height="1.8" fill="#9c9c9e"/>
<rect x="10" y="868.0" width="9" height="1.6" fill="#9c9c9e"/>
<rect x="10" y="873.0" width="9" height="1.6" fill="#9c9c9e"/>
<rect x="10" y="877.9" width="9" height="1.6" fill="#9c9c9e"/>
<rect x="10" y="882.8" width="9" height="1.6" fill="#9c9c9e"/>
<text transform="translate(-6.8,842.3) rotate(90)" font-family="Liberation Sans" font-weight="normal" font-size="15" fill="#f4f4f4" letter-spacing="2.4">1600.0</text>
<rect x="0" y="887.5" width="19" height="2" fill="#9c9c9e"/>
<rect x="10" y="892.7" width="9" height="1.6" fill="#9c9c9e"/>
<rect x="10" y="897.6" width="9" height="1.6" fill="#9c9c9e"/>
<rect x="10" y="902.5" width="9" height="1.6" fill="#9c9c9e"/>
<rect x="10" y="907.5" width="9" height="1.6" fill="#9c9c9e"/>
<rect x="2.5" y="912.3" width="16.5" height="1.8" fill="#9c9c9e"/>
<rect x="10" y="917.3" width="9" height="1.6" fill="#9c9c9e"/>
<rect x="10" y="922.2" width="9" height="1.6" fill="#9c9c9e"/>
<rect x="10" y="927.1" width="9" height="1.6" fill="#9c9c9e"/>
<rect x="10" y="932.1" width="9" height="1.6" fill="#9c9c9e"/>
<text transform="translate(-6.8,891.5) rotate(90)" font-family="Liberation Sans" font-weight="normal" font-size="15" fill="#f4f4f4" letter-spacing="2.4">1700.0</text>
<rect x="0" y="936.8" width="19" height="2" fill="#9c9c9e"/>
<rect x="10" y="941.9" width="9" height="1.6" fill="#9c9c9e"/>
<rect x="10" y="946.9" width="9" height="1.6" fill="#9c9c9e"/>
<rect x="10" y="951.8" width="9" height="1.6" fill="#9c9c9e"/>
<rect x="10" y="956.7" width="9" height="1.6" fill="#9c9c9e"/>
<text transform="translate(-6.8,940.8) rotate(90)" font-family="Liberation Sans" font-weight="normal" font-size="15" fill="#f4f4f4" letter-spacing="2.4">1800.0</text>
<text transform="translate(-6.8,990.0) rotate(90)" font-family="Liberation Sans" font-weight="normal" font-size="15" fill="#f4f4f4" letter-spacing="2.4">1900.0</text>
</svg>
<div id="canvas" class="a"></div>
<!-- top map -->
<svg class="a" style="left:163px;top:199.5px" width="1180" height="580"><use href="#starmap"/><rect x="2" y="2" width="1176" height="700" fill="none" stroke="#004a8a" stroke-width="4"/></svg>
<!-- green circle -->
<svg class="a" style="left:1438px;top:143px" width="50" height="50"><circle cx="25" cy="24.5" r="24.5" fill="#5fad66"/><path d="M19,11 L31,23.3 L19,35.6" stroke="#fff" stroke-width="1.4" fill="none"/></svg>
<!-- printformer logo -->
<svg class="a" style="left:8px;top:1064px" width="125" height="40">
 <path d="M15,4.5 Q17.5,2 20,4.5 L32,16.5 Q34.5,19 31.5,21 L22,26 L23.5,35 L13,30.5 Q11,32 9.5,30 L3.5,22 Q1,19 3.5,16.5Z" fill="#3e83c7"/>
 <path d="M13,30 L20,27 L23.5,35Z" fill="#5fb0e8"/>
 <path d="M10,13.5 C10,9.5 15,8 18.5,9 C22.5,10 23,14 21.5,17 C20,20 16,20.5 13.5,20 L13.5,29" stroke="#e9e9e9" stroke-width="2.2" fill="none"/>
 <text x="38" y="23" font-family="Liberation Serif" font-size="17.5" fill="#3d85c6" textLength="78.5" lengthAdjust="spacingAndGlyphs">printformer</text>
</svg>

<div id="panel" class="a"></div>
<div id="nav" class="a"></div>
<div class="a" style="left:1948px;top:492px;width:135px;height:123px;background:#3f3e43"></div>
<div class="ptxt" style="left:1526px;top:142px;font-size:28px;line-height:32px;color:#e2e2e2;letter-spacing:2.1px">Produkte</div>
<div class="ptxt" style="left:1527px;top:177.5px;font-size:20.5px;line-height:29.5px;color:#cfcfcf;letter-spacing:0.8px">Platziere das gewünschte Produkt mittels<br>Drag &amp; Drop im Editor.</div>
<div class="dots" style="top:271px"></div>
<div class="a" style="left:1523px;top:291px;width:409px;height:64px;border:4px solid #e6007e;background:#5fad66"></div>
<div class="ptxt" style="left:1527px;top:314px;width:401px;text-align:center;font-size:16.5px;font-weight:bold;color:#fff;letter-spacing:0.5px;line-height:18px">Auswahl platzieren</div>
<div class="dots" style="top:372px"></div>
<div class="a" style="left:1527px;top:395px;width:405px;height:43px;background:#2c2b30;border-radius:2px"></div>
<div class="ptxt" style="left:1543px;top:405px;font-size:20.5px;line-height:24px;color:#8d8c90;letter-spacing:0.4px">Suche nach Art.-Nr., Name, ...</div>
<svg class="a" style="left:1895px;top:398px" width="36" height="36"><circle cx="17.3" cy="15.5" r="8.3" stroke="#e0e0e0" stroke-width="1.9" fill="none"/><path d="M23.3,21.5 L27.5,25.8" stroke="#e0e0e0" stroke-width="2" stroke-linecap="round"/></svg>
<div class="a" style="left:1523px;top:448px;width:409px;height:64px;border:4px solid #e6007e;background:#2c2b30"></div>
<div class="a" style="left:1542px;top:463px;width:148px;height:27px;background:#3f3e43;border-radius:3px"></div>
<div class="ptxt" style="left:1545px;top:464px;font-size:20.5px;line-height:24px;color:#f0f0f0;letter-spacing:0.8px">outer space</div>
<svg class="a" style="left:1670px;top:466px" width="20" height="20"><path d="M5.5,5.5 L14.5,14.5 M14.5,5.5 L5.5,14.5" stroke="#fff" stroke-width="2.6"/></svg>
<div class="a" style="left:1527px;top:513px;width:405px;height:54px;background:#2c2b30;border-radius:0 0 2px 2px"></div>
<div class="ptxt" style="left:1545px;top:522px;font-size:20.5px;line-height:24px;color:#8d8c90;letter-spacing:1.1px">starmap-container-hashtags</div>
<div class="dots" style="top:591px"></div>
<!-- product 1 -->
<svg class="a" style="left:1537px;top:624px" width="118" height="118" viewBox="0 0 100 100" preserveAspectRatio="none"><defs><radialGradient id="cbp2" cx="0.66" cy="0.5" r="0.8"><stop offset="0" stop-color="#4a4450"/><stop offset="0.55" stop-color="#332e36"/><stop offset="1" stop-color="#161214"/></radialGradient></defs>
<rect width="100" height="100" fill="url(#cbp2)"/>
<path d="M26.8,0 L0,74" stroke="#b8b8c4" stroke-width="1.4" opacity="0.85"/>
<rect x="10" y="9.8" width="80" height="80" fill="none" stroke="#dedede" stroke-width="0.6"/>
<g transform="translate(50,43) rotate(42) scale(1.1)" stroke-linejoin="round">
 <path d="M-12,2 C-19,6 -20,14 -18,24 L-11,20Z" fill="#3c7ab8" stroke="#e2e2e2" stroke-width="2.6"/>
 <path d="M12,2 C19,6 20,14 18,24 L11,20Z" fill="#3c7ab8" stroke="#e2e2e2" stroke-width="2.6"/>
 <path d="M0,-31 C11,-22 14,-8 13,6 L11,24 L-11,24 L-13,6 C-14,-8 -11,-22 0,-31Z" fill="#3f7cb8" stroke="#e4e4e4" stroke-width="2.8"/>
 <path d="M-9,-17 L9,-17" stroke="#e2e2e2" stroke-width="2.6"/>
 <path d="M-12,17 L12,17" stroke="#e2e2e2" stroke-width="2.6"/>
 <circle cx="1" cy="-7" r="5.6" fill="#cfcfcf" stroke="#eaeaea" stroke-width="1.4"/>
 <path d="M-8,26 L-10,38 M-3,26 L-4,44 M3,26 L4,42 M8,26 L10,36" stroke="#d8d8d8" stroke-width="2.2" stroke-linecap="round" opacity="0.9"/>
</g>
<path d="M74,18 L80,15.5 M84,14 L90,12.5 M94,11.5 L100,10.5" stroke="#c8c8c8" stroke-width="1.8" stroke-linecap="round"/>
<circle cx="50" cy="94.8" r="2.7" fill="#f0f0f0"/></svg>
<div class="ptxt" style="left:1663px;top:617px;font-size:21.5px;line-height:24px;color:#ececec;letter-spacing:1.5px">Outer Space</div>
<div class="ptxt" style="left:1664px;top:654px;font-size:14.5px;line-height:17px;color:#d6d6d6;letter-spacing:1.0px">Untertitel</div>
<div class="ptxt" style="left:1664px;top:687px;font-size:14.5px;line-height:17px;color:#d6d6d6;letter-spacing:0.75px">Raketen dürfen nicht fehlen!</div>
<div class="ptxt" style="left:1664px;top:789px;font-size:15px;line-height:17px;color:#e6e6e6;letter-spacing:0.2px"><span style="font-weight:bold;letter-spacing:0.8px">X €</span>&nbsp;&nbsp;&nbsp;<span style="text-decoration:line-through;font-size:14px;letter-spacing:0.6px">(XX €)</span></div>
<div class="dots" style="top:830px"></div>
<!-- product 2 -->
<svg class="a" style="left:1537px;top:862px" width="118" height="118" viewBox="0 0 100 100" preserveAspectRatio="none"><defs><linearGradient id="ybp1" x1="0" y1="0" x2="0.25" y2="1"><stop offset="0" stop-color="#f8e000"/><stop offset="0.22" stop-color="#fbf000"/><stop offset="0.36" stop-color="#e8a400"/><stop offset="0.5" stop-color="#8a4a10"/><stop offset="0.62" stop-color="#3a2a14"/><stop offset="1" stop-color="#2c2418"/></linearGradient>
<radialGradient id="bbp1" cx="0.6" cy="0.5" r="0.75"><stop offset="0" stop-color="#0a5ee0"/><stop offset="0.7" stop-color="#0850cc"/><stop offset="1" stop-color="#053a98"/></radialGradient>
<clipPath id="cpp1"><path d="M0,14.6 L32.9,8.2 L71.8,91.6 L63.6,100 L0,100Z"/></clipPath><filter id="blp1" x="-10%" y="-10%" width="120%" height="120%"><feGaussianBlur stdDeviation="0.35"/></filter>
<linearGradient id="rpp1" x1="0" y1="0" x2="0.3" y2="1"><stop offset="0" stop-color="#c86080"/><stop offset="0.3" stop-color="#8a4aa0"/><stop offset="0.5" stop-color="#d86070"/><stop offset="0.62" stop-color="#f02a10"/><stop offset="1" stop-color="#e82a10"/></linearGradient></defs>
<rect width="100" height="100" fill="url(#bbp1)"/>
<path d="M59.8,1.9 L89.8,0 L100,25 L100,62.5 L90.1,71.4Z" fill="url(#rpp1)"/>
<path d="M59.8,1.9 L90.1,71.4" stroke="#f0e0e0" stroke-width="0.8"/>
<path d="M68,22 C75,30 88,28 100,34" stroke="#f8d8c8" stroke-width="2.2" fill="none" opacity="0.8"/>
<path d="M0,14.6 L32.9,8.2 L71.8,91.6 L63.6,100 L0,100Z" fill="url(#ybp1)"/>
<g stroke-linecap="round" fill="none" clip-path="url(#cpp1)"><g filter="url(#blp1)">
<path d="M2,38 C15,34 30,31 44,26 M4,46 C18,42 32,38 48,33 M2,56 C16,52 32,47 50,40 M6,64 C20,59 34,54 52,46 M3,75 C18,68 34,60 55,52 M12,82 C26,74 40,66 57,58 M26,88 C38,80 48,72 60,64 M30,96 C42,86 52,78 62,70" stroke="#f4dc00" stroke-width="1.8" opacity="0.95"/>
<path d="M3,42 C16,38 30,35 46,30 M5,51 C20,47 34,42 49,36 M6,60 C20,55 34,50 51,43 M8,70 C22,64 36,57 54,49 M18,80 C30,73 42,66 56,60 M36,92 C46,84 54,76 61,70" stroke="#e06a10" stroke-width="1.5" opacity="0.9"/>
</g></g>
<rect x="10" y="9.5" width="80" height="80" fill="none" stroke="#e8e8e8" stroke-width="0.55"/>
<circle cx="49" cy="94.8" r="2.3" fill="#f2f2f2"/></svg>
<div class="ptxt" style="left:1663px;top:856px;font-size:21.5px;line-height:24px;color:#ececec;letter-spacing:1.5px">Outer Space</div>
<div class="ptxt" style="left:1664px;top:893px;font-size:14.5px;line-height:17px;color:#d6d6d6;letter-spacing:1.0px">Untertitel</div>
<div class="ptxt" style="left:1664px;top:925px;font-size:14.5px;line-height:17px;color:#d6d6d6;letter-spacing:1.0px">Weltraummotive mit Überraschung.</div>
<div class="ptxt" style="left:1664px;top:1027px;font-size:15px;line-height:17px;color:#e6e6e6;letter-spacing:0.2px"><span style="font-weight:bold;letter-spacing:0.8px">X €</span>&nbsp;&nbsp;&nbsp;<span style="text-decoration:line-through;font-size:14px;letter-spacing:0.6px">(XX €)</span></div>
<div class="dots" style="top:1068px"></div>

<svg class="a" style="left:1948px;top:123px" width="135" height="984">
<g transform="translate(-1948,-123)" stroke="#dedede" stroke-width="1.9" fill="none" stroke-linecap="round" stroke-linejoin="round">
 <!-- edit -->
 <path d="M2019,155 L2008,155 Q2005.5,155 2005.5,157.5 L2005.5,185.5 Q2005.5,188 2008,188 L2030.5,188 Q2032.7,188 2032.7,185.5 L2032.7,167"/>
 <path d="M2013.5,172.5 L2014.8,166.5 L2027,154.3 Q2029,152.5 2031,154.5 Q2033,156.5 2031,158.5 L2019,170.7Z"/>
 <!-- swap -->
 <path d="M2007.5,285 L2034.5,285 M2029,279.5 L2034.5,285 L2029,290.5"/>
 <path d="M2031,303 L2004,303 M2009.5,297.5 L2004,303 L2009.5,308.5"/>
 <!-- catalog -->
 <path d="M2008,400.5 L2024.5,400.5 L2032.7,408.5 L2032.7,432 Q2032.7,434.5 2030.2,434.5 L2008,434.5 Q2005.5,434.5 2005.5,432 L2005.5,403 Q2005.5,400.5 2008,400.5Z"/>
 <path d="M2018.8,400.5 L2018.8,416.2 M2005.5,416.2 L2032.7,416.2 M2024.5,416.2 L2024.5,434.5 M2005.5,409.5 L2018.8,409.5"/>
 <!-- bag -->
 <path d="M2007.5,528.5 L2030.7,528.5 Q2032.7,528.5 2032.7,530.5 L2032.7,557.5 Q2032.7,559.5 2030.7,559.5 L2007.5,559.5 Q2005.5,559.5 2005.5,557.5 L2005.5,530.5 Q2005.5,528.5 2007.5,528.5Z" stroke="#f2f2f2"/>
 <path d="M2013.5,537 L2013.5,526.5 Q2013.5,521 2018.8,521 Q2024,521 2024,526.5 L2024,537" stroke="#f2f2f2"/>
 <!-- shapes -->
 <rect x="2002" y="647" width="15.2" height="15.2" rx="1.5"/>
 <circle cx="2028.2" cy="654.7" r="7.6"/>
 <path d="M2005.5,665.5 L2013.7,665.5 L2017.5,672 L2013.7,678.7 L2005.5,678.7 L2001.7,672Z"/>
 <path d="M2028.4,666 L2036,679 L2020.8,679Z"/>
 <!-- gear -->
 <path id="gear" d="M2033.78,1034.04 L2034.20,1036.24 L2038.25,1036.59 L2038.25,1039.41 L2034.20,1039.76 L2033.78,1041.96 L2033.04,1044.08 L2036.38,1046.40 L2034.96,1048.85 L2031.28,1047.12 L2029.82,1048.82 L2028.12,1050.28 L2029.85,1053.96 L2027.40,1055.38 L2025.08,1052.04 L2022.96,1052.78 L2020.76,1053.20 L2020.41,1057.25 L2017.59,1057.25 L2017.24,1053.20 L2015.04,1052.78 L2012.92,1052.04 L2010.60,1055.38 L2008.15,1053.96 L2009.88,1050.28 L2008.18,1048.82 L2006.72,1047.12 L2003.04,1048.85 L2001.62,1046.40 L2004.96,1044.08 L2004.22,1041.96 L2003.80,1039.76 L1999.75,1039.41 L1999.75,1036.59 L2003.80,1036.24 L2004.22,1034.04 L2004.96,1031.92 L2001.62,1029.60 L2003.04,1027.15 L2006.72,1028.88 L2008.18,1027.18 L2009.88,1025.72 L2008.15,1022.04 L2010.60,1020.62 L2012.92,1023.96 L2015.04,1023.22 L2017.24,1022.80 L2017.59,1018.75 L2020.41,1018.75 L2020.76,1022.80 L2022.96,1023.22 L2025.08,1023.96 L2027.40,1020.62 L2029.85,1022.04 L2028.12,1025.72 L2029.82,1027.18 L2031.28,1028.88 L2034.96,1027.15 L2036.38,1029.60 L2033.04,1031.92Z"/>
 <circle cx="2019" cy="1038" r="9.6"/>
</g>
</svg>
<div class="nl" style="top:201px">Editieren</div>
<div class="nl" style="top:324px;letter-spacing:0.55px">Inhalts-Austausch</div>
<div class="nl" style="top:447px;letter-spacing:0.6px">Katalogtemplates</div>
<div class="nl" style="top:570px">Produkte</div>
<div class="nl" style="top:693px">Formen</div>
<div class="nl" style="top:1068px">Settings</div>


<div id="pink" class="a">
 <svg class="a" style="left:22.5px;top:19.5px" width="1186" height="720"><g transform="scale(1.0034)"><use href="#starmap"/><rect x="2" y="2" width="1176" height="720" fill="none" stroke="#004a8a" stroke-width="4"/></g></svg>
 <svg class="a" style="left:0;top:0" width="1247" height="720"><g transform="translate(-136,-772)">
<rect x="380" y="1010" width="257" height="370" fill="#c2d8ee" fill-opacity="0.85"/>
<rect x="668" y="818" width="257" height="370" fill="#c2d8ee" fill-opacity="0.85"/>
<g font-family="Liberation Serif" font-weight="bold" font-size="6.9" fill="#1c1c1c" stroke="#1c1c1c" stroke-width="0.32"><text x="397.6" y="1033.6" textLength="198.0" lengthAdjust="spacingAndGlyphs">Auch wenn die Tage wieder regnerischer und dunkler werden,</text><text x="397.6" y="1041.3" textLength="220.8" lengthAdjust="spacingAndGlyphs">erstrahlt unser Büro in den intensivsten Farben. So lässt es sich dann</text><text x="397.6" y="1049.6" textLength="97.2" lengthAdjust="spacingAndGlyphs">doch ganz entspannt arbeiten!</text></g>
<g font-family="Liberation Serif" font-weight="bold" font-size="6.9" fill="#1f5cff" stroke="#1f5cff" stroke-width="0.32"><text x="397.6" y="1073.8" textLength="219.6" lengthAdjust="spacingAndGlyphs">#spaceposter #discoveringnewdimensions #web2print #webtoprint</text><text x="397.6" y="1082.6" textLength="204.0" lengthAdjust="spacingAndGlyphs">#web2publish #w2p #webtopublish #printbusiness #ebusiness</text><text x="397.6" y="1091.2" textLength="202.2" lengthAdjust="spacingAndGlyphs">#ecommerce #digitalprinting #digitalpublishing #onlineeditor</text><text x="397.6" y="1099.6" textLength="195.0" lengthAdjust="spacingAndGlyphs">#printformer #printfomer10 #rissc #risscsolutions #shopify</text></g>
<g font-family="Liberation Serif" font-weight="bold" font-size="6.9" fill="#1c1c1c" stroke="#1c1c1c" stroke-width="0.32"><text x="685.8" y="839.6" textLength="200.4" lengthAdjust="spacingAndGlyphs">Wer uns in unserem Büro besucht kann einiges entdecken. Der</text><text x="685.8" y="848.2" textLength="219.0" lengthAdjust="spacingAndGlyphs">Hinweis auf unser rissc Universum ist an vielen Stellen zu finden, so</text><text x="685.8" y="856.6" textLength="203.4" lengthAdjust="spacingAndGlyphs">auch in Form von handgemalten Elementen an der Wand neben</text><text x="685.8" y="864.8" textLength="206.4" lengthAdjust="spacingAndGlyphs">unserer Siebträgermaschine. Damit man am Morgen auch gleich</text><text x="685.8" y="873.0" textLength="87.6" lengthAdjust="spacingAndGlyphs">weiß wo man sich befindet!</text></g>
<g font-family="Liberation Serif" font-weight="bold" font-size="6.9" fill="#1f5cff" stroke="#1f5cff" stroke-width="0.32"><text x="685.8" y="897.6" textLength="212.4" lengthAdjust="spacingAndGlyphs">#universum #spaceship #discoveringnewdimensions #web2print</text><text x="685.8" y="906.0" textLength="208.2" lengthAdjust="spacingAndGlyphs">#webtoprint #web2publish #w2p #webtopublish #printbusiness</text><text x="685.8" y="914.3" textLength="194.4" lengthAdjust="spacingAndGlyphs">#ebusiness #ecommerce #digitalprinting #digitalpublishing</text><text x="685.8" y="922.4" textLength="209.4" lengthAdjust="spacingAndGlyphs">#onlineeditor #printformer #printfomer10 #rissc #risscsolutions</text><text x="685.8" y="930.7" textLength="28.8" lengthAdjust="spacingAndGlyphs">#shopify</text></g>
<svg x="397.8" y="1141.9" width="221" height="221" viewBox="0 0 100 100" preserveAspectRatio="none"><defs><linearGradient id="ybc1" x1="0" y1="0" x2="0.25" y2="1"><stop offset="0" stop-color="#f8e000"/><stop offset="0.22" stop-color="#fbf000"/><stop offset="0.36" stop-color="#e8a400"/><stop offset="0.5" stop-color="#8a4a10"/><stop offset="0.62" stop-color="#3a2a14"/><stop offset="1" stop-color="#2c2418"/></linearGradient>
<radialGradient id="bbc1" cx="0.6" cy="0.5" r="0.75"><stop offset="0" stop-color="#0a5ee0"/><stop offset="0.7" stop-color="#0850cc"/><stop offset="1" stop-color="#053a98"/></radialGradient>
<clipPath id="cpc1"><path d="M0,14.6 L32.9,8.2 L71.8,91.6 L63.6,100 L0,100Z"/></clipPath><filter id="blc1" x="-10%" y="-10%" width="120%" height="120%"><feGaussianBlur stdDeviation="0.35"/></filter>
<linearGradient id="rpc1" x1="0" y1="0" x2="0.3" y2="1"><stop offset="0" stop-color="#c86080"/><stop offset="0.3" stop-color="#8a4aa0"/><stop offset="0.5" stop-color="#d86070"/><stop offset="0.62" stop-color="#f02a10"/><stop offset="1" stop-color="#e82a10"/></linearGradient></defs>
<rect width="100" height="100" fill="url(#bbc1)"/>
<path d="M59.8,1.9 L89.8,0 L100,25 L100,62.5 L90.1,71.4Z" fill="url(#rpc1)"/>
<path d="M59.8,1.9 L90.1,71.4" stroke="#f0e0e0" stroke-width="0.8"/>
<path d="M68,22 C75,30 88,28 100,34" stroke="#f8d8c8" stroke-width="2.2" fill="none" opacity="0.8"/>
<path d="M0,14.6 L32.9,8.2 L71.8,91.6 L63.6,100 L0,100Z" fill="url(#ybc1)"/>
<g stroke-linecap="round" fill="none" clip-path="url(#cpc1)"><g filter="url(#blc1)">
<path d="M2,38 C15,34 30,31 44,26 M4,46 C18,42 32,38 48,33 M2,56 C16,52 32,47 50,40 M6,64 C20,59 34,54 52,46 M3,75 C18,68 34,60 55,52 M12,82 C26,74 40,66 57,58 M26,88 C38,80 48,72 60,64 M30,96 C42,86 52,78 62,70" stroke="#f4dc00" stroke-width="1.8" opacity="0.95"/>
<path d="M3,42 C16,38 30,35 46,30 M5,51 C20,47 34,42 49,36 M6,60 C20,55 34,50 51,43 M8,70 C22,64 36,57 54,49 M18,80 C30,73 42,66 56,60 M36,92 C46,84 54,76 61,70" stroke="#e06a10" stroke-width="1.5" opacity="0.9"/>
</g></g>
<rect x="10" y="9.5" width="80" height="80" fill="none" stroke="#e8e8e8" stroke-width="0.55"/>
<circle cx="49" cy="94.8" r="2.3" fill="#f2f2f2"/></svg>
<svg x="685.3" y="948.9" width="222" height="220" viewBox="0 0 100 100" preserveAspectRatio="none"><defs><radialGradient id="cbc2" cx="0.66" cy="0.5" r="0.8"><stop offset="0" stop-color="#4a4450"/><stop offset="0.55" stop-color="#332e36"/><stop offset="1" stop-color="#161214"/></radialGradient></defs>
<rect width="100" height="100" fill="url(#cbc2)"/>
<path d="M26.8,0 L0,74" stroke="#b8b8c4" stroke-width="1.4" opacity="0.85"/>
<rect x="10" y="9.8" width="80" height="80" fill="none" stroke="#dedede" stroke-width="0.6"/>
<g transform="translate(50,43) rotate(42) scale(1.1)" stroke-linejoin="round">
 <path d="M-12,2 C-19,6 -20,14 -18,24 L-11,20Z" fill="#3c7ab8" stroke="#e2e2e2" stroke-width="2.6"/>
 <path d="M12,2 C19,6 20,14 18,24 L11,20Z" fill="#3c7ab8" stroke="#e2e2e2" stroke-width="2.6"/>
 <path d="M0,-31 C11,-22 14,-8 13,6 L11,24 L-11,24 L-13,6 C-14,-8 -11,-22 0,-31Z" fill="#3f7cb8" stroke="#e4e4e4" stroke-width="2.8"/>
 <path d="M-9,-17 L9,-17" stroke="#e2e2e2" stroke-width="2.6"/>
 <path d="M-12,17 L12,17" stroke="#e2e2e2" stroke-width="2.6"/>
 <circle cx="1" cy="-7" r="5.6" fill="#cfcfcf" stroke="#eaeaea" stroke-width="1.4"/>
 <path d="M-8,26 L-10,38 M-3,26 L-4,44 M3,26 L4,42 M8,26 L10,36" stroke="#d8d8d8" stroke-width="2.2" stroke-linecap="round" opacity="0.9"/>
</g>
<path d="M74,18 L80,15.5 M84,14 L90,12.5 M94,11.5 L100,10.5" stroke="#c8c8c8" stroke-width="1.8" stroke-linecap="round"/>
<circle cx="50" cy="94.8" r="2.7" fill="#f0f0f0"/></svg>
<g fill="none" stroke="#e43a48" stroke-width="2.2" stroke-dasharray="24 19">
<rect x="396.8" y="1140.1" width="222.5" height="223.2"/>
<rect x="685.7" y="947.6" width="222.5" height="222.3"/>
</g>
</g></svg>

</div>
<!-- arrow -->
<svg class="a" style="left:0;top:0" width="2083" height="1476">
 <path d="M1527,352 L962,868" stroke="#e6007e" stroke-width="4.2" fill="none"/>
 <path d="M947,882 L957.7,861 L961.5,867.8 L969,872.7Z" fill="#e6007e"/>
</svg>
</body></html>
